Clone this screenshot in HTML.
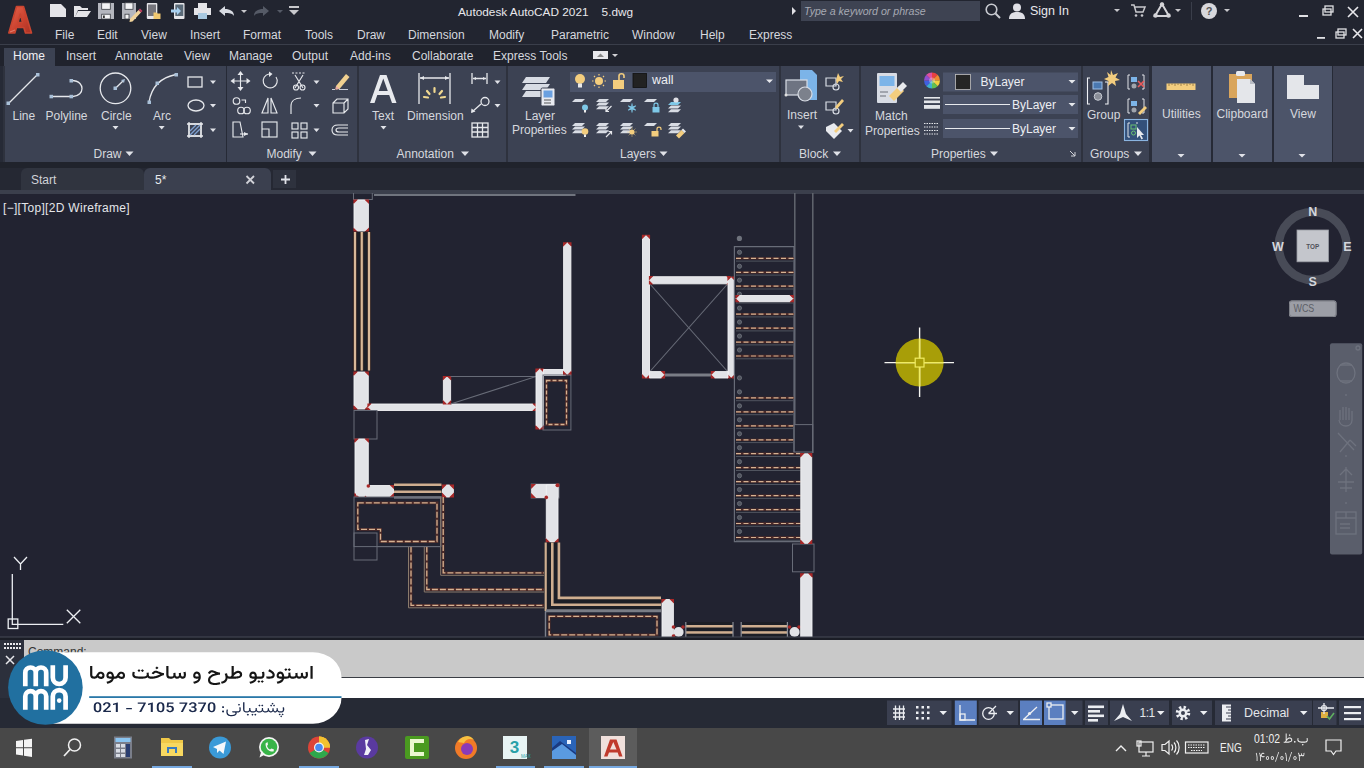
<!DOCTYPE html>
<html><head><meta charset="utf-8">
<style>
*{margin:0;padding:0;box-sizing:border-box}
html,body{width:1364px;height:768px;overflow:hidden;background:#222331;font-family:"Liberation Sans",sans-serif;font-size:12px;color:#d6d8de}
.a{position:absolute}
.t{position:absolute;white-space:nowrap;line-height:1}
svg{position:absolute;overflow:visible}
</style></head><body>

<!-- title+menu -->
<div class="a" style="left:0;top:0;width:1364px;height:44px;background:#222530"></div>
<div class="a" style="left:0;top:44px;width:1364px;height:1px;background:#3a3e4a"></div>
<!-- ribbon tab row -->
<div class="a" style="left:0;top:45px;width:1364px;height:21px;background:#20232d"></div>
<div class="a" style="left:4px;top:48px;width:51px;height:18px;background:#3c4252"></div>
<!-- ribbon panels -->
<div class="a" style="left:0;top:66px;width:1364px;height:96px;background:#262a36"></div>
<div class="a" style="left:4px;top:66px;width:222px;height:96px;background:#3c4253"></div>
<div class="a" style="left:227px;top:66px;width:130px;height:96px;background:#3c4253"></div>
<div class="a" style="left:359px;top:66px;width:147px;height:96px;background:#3c4253"></div>
<div class="a" style="left:508px;top:66px;width:271px;height:96px;background:#3c4253"></div>
<div class="a" style="left:781px;top:66px;width:78px;height:96px;background:#3c4253"></div>
<div class="a" style="left:861px;top:66px;width:220px;height:96px;background:#3c4253"></div>
<div class="a" style="left:1083px;top:66px;width:66px;height:96px;background:#3c4253"></div>
<div class="a" style="left:1152px;top:66px;width:59px;height:96px;background:#4c5469"></div>
<div class="a" style="left:1213px;top:66px;width:59px;height:96px;background:#4c5469"></div>
<div class="a" style="left:1274px;top:66px;width:58px;height:96px;background:#4c5469"></div>
<div class="a" style="left:1333px;top:66px;width:31px;height:96px;background:#3d4152"></div>
<!-- strip under ribbon -->
<div class="a" style="left:0;top:162px;width:1364px;height:5.5px;background:#20232c"></div>
<!-- file tabs -->
<div class="a" style="left:0;top:167.5px;width:1364px;height:23px;background:#252833"></div>
<div class="a" style="left:21px;top:168px;width:123px;height:22px;background:#30343f;border-radius:6px 6px 0 0"></div>
<div class="a" style="left:144px;top:168px;width:127px;height:22px;background:#3b404f;border-radius:6px 6px 0 0"></div>
<div class="a" style="left:273px;top:170px;width:23px;height:18px;background:#2e323e"></div>
<div class="a" style="left:0;top:190px;width:1364px;height:3.7px;background:#3b3f4c"></div>
<!-- command line -->
<div class="a" style="left:0;top:637px;width:1364px;height:3px;background:#1b1d26"></div>
<div class="a" style="left:0;top:640px;width:24px;height:58px;background:#2c303c"></div>
<div class="a" style="left:24px;top:640px;width:1340px;height:37px;background:#c9c9c9"></div>
<div class="a" style="left:24px;top:677px;width:1340px;height:1px;background:#3a3d44"></div>
<div class="a" style="left:24px;top:678px;width:1340px;height:20px;background:#ffffff"></div>
<!-- status bar -->
<div class="a" style="left:0;top:698px;width:1364px;height:30px;background:#262a35"></div>
<!-- taskbar -->
<div class="a" style="left:0;top:728px;width:1364px;height:40px;background:#484848"></div>


<!-- AutoCAD logo -->
<svg style="left:0;top:0" width="40" height="40" viewBox="0 0 40 40">
<defs><linearGradient id="lg" x1="0" y1="0" x2="1" y2="1"><stop offset="0" stop-color="#e8634a"/><stop offset="0.6" stop-color="#c8402e"/><stop offset="1" stop-color="#a83224"/></linearGradient></defs>
<path d="M16.5 6.5 L23.5 6.5 L31.5 33 L25.5 33 L23.8 27.5 L16.5 27.5 L14.8 33 L8.8 33 Z M18 22.5 L22.5 22.5 L20.3 14 Z" fill="url(#lg)" stroke="#c94530" stroke-width="1.6" stroke-linejoin="round" fill-rule="evenodd"/>
<path d="M10 32 L15 30" stroke="#f0a090" stroke-width="1.2" opacity="0.6"/>
</svg>
<!-- quick access -->
<svg style="left:0;top:0" width="310" height="24" viewBox="0 0 310 24">
<g fill="#e4e4e8">
<path d="M50 4 L61 4 L66 9 L66 17 L50 17 Z"/>
<path d="M74 6 L80 6 L82 8 L88 8 L88 10 L78 10 L75 17 L74 17Z M78 11 L91 11 L87 17 L75 17 Z"/>
<path d="M98 3 L114 3 L114 19 L98 19Z"/>
<path d="M122 3 L136 3 L136 19 L122 19Z"/>
</g>
<g fill="#b4b6be"><rect x="98" y="3" width="16" height="16"/><rect x="122" y="3" width="14" height="16"/></g>
<g fill="#f4f4f6" stroke="#3a3c44" stroke-width="0.8"><rect x="101.7" y="2.8" width="8.6" height="6.5"/><rect x="101.7" y="14.2" width="8.6" height="4.8"/><rect x="125" y="2.8" width="8" height="6.5"/><rect x="125" y="14.2" width="4" height="4.8"/></g>
<rect x="103" y="15.5" width="1.8" height="2.5" fill="#333"/>
<path d="M130 19 L138.5 10 L141 12.5 L132.5 21.5 L129.5 22Z" fill="#f0d29a"/><path d="M138.5 10 L140 8.5 L142.5 11 L141 12.5Z" fill="#c04060"/>
<rect x="146.8" y="3" width="10.5" height="16" rx="1" fill="#e6e6ea"/><rect x="148" y="4.5" width="8" height="11.5" fill="#75757c"/>
<path d="M153.5 12.5 L156.5 12.5 L157.5 13.5 L160.5 13.5 L160.5 19 L153.5 19Z" fill="#f0c870"/>
<rect x="174" y="3" width="10.5" height="16" rx="1" fill="#e6e6ea"/><rect x="175.3" y="4.5" width="8" height="11.5" fill="#5a6a78"/>
<path d="M171 9.5 L177 9.5 L177 7 L181 11 L177 15 L177 12.5 L171 12.5Z" fill="#a8d0f0"/>
<rect x="198" y="3" width="9" height="5" fill="#e4e4e8"/>
<rect x="194" y="8" width="17" height="7" fill="#e4e4e8"/>
<rect x="198" y="13" width="9" height="6" fill="#a8c8e0"/>
<path d="M219 11 L225 6 L225 9 C230 9 234 11 234 16 C232 13 229 13 225 13 L225 16Z" fill="#d8dbe2"/>
<path d="M241 10 L247 10 L244 13Z" fill="#c8c8cc"/>
<path d="M269 11 L263 6 L263 9 C258 9 254 11 254 16 C256 13 259 13 263 13 L263 16Z" fill="#555a66"/>
<path d="M277 10 L283 10 L280 13Z" fill="#555a66"/>
<rect x="289" y="6" width="10" height="2" fill="#c8c8cc"/>
<path d="M289 10 L299 10 L294 15Z" fill="#c8c8cc"/>
</svg>
<div class="t" style="left:458px;top:7px;font-size:11.8px;color:#e8e8ec">Autodesk AutoCAD 2021&nbsp;&nbsp;&nbsp;&nbsp;5.dwg</div>
<!-- search -->
<svg style="left:788px;top:0" width="12" height="22"><path d="M4 7 L8 11 L4 15Z" fill="#e0e0e4"/></svg>
<div class="a" style="left:801px;top:1px;width:179px;height:20px;background:#3e4352"></div>
<div class="t" style="left:804px;top:6px;font-size:10.6px;font-style:italic;color:#a6a9b2">Type a keyword or phrase</div>
<svg style="left:984px;top:2px" width="20" height="20"><circle cx="7.5" cy="7.5" r="5.3" fill="none" stroke="#c8cad0" stroke-width="1.6"/><path d="M11.5 11.5 L16 16" stroke="#c8cad0" stroke-width="2"/></svg>
<svg style="left:1008px;top:2px" width="18" height="18"><circle cx="9" cy="5.5" r="4" fill="#e0e0e6"/><path d="M1 17 C1 11 5 10 9 10 C13 10 17 11 17 17Z" fill="#e0e0e6"/></svg>
<div class="t" style="left:1030px;top:5px;font-size:12.5px;color:#e8e8ec">Sign In</div>
<svg style="left:1110px;top:0" width="120" height="22">
<path d="M4 9 L10 9 L7 12Z" fill="#c8c8cc"/>
<path d="M21 5 L24 5 L26 12 L33 12 L35 7 L25 7" fill="none" stroke="#c8c8cc" stroke-width="1.5"/><circle cx="26" cy="15.5" r="1.3" fill="#c8c8cc"/><circle cx="32" cy="15.5" r="1.3" fill="#c8c8cc"/>
<path d="M52 4 L45 16 L59 16Z" fill="none" stroke="#d4d4d8" stroke-width="2"/><circle cx="52" cy="4.5" r="2.2" fill="#d4d4d8"/><circle cx="45.5" cy="15.5" r="2.2" fill="#d4d4d8"/><circle cx="58.5" cy="15.5" r="2.2" fill="#d4d4d8"/>
<path d="M65 9 L71 9 L68 12Z" fill="#c8c8cc"/>
<rect x="81" y="2" width="1" height="18" fill="#3a3e4a"/>
<circle cx="99" cy="11" r="8" fill="#d8d8dc"/><text x="99" y="15" font-size="11" text-anchor="middle" fill="#555" font-family="Liberation Sans" font-weight="bold">?</text>
<path d="M114 9 L120 9 L117 12Z" fill="#c8c8cc"/>
</svg>
<!-- window buttons -->
<svg style="left:1290px;top:0" width="74" height="44">
<rect x="9" y="15" width="9" height="2" fill="#e0e0e4"/>
<rect x="33" y="9" width="8" height="6" fill="none" stroke="#e0e0e4" stroke-width="1.3"/><rect x="35" y="6" width="8" height="6" fill="none" stroke="#e0e0e4" stroke-width="1.3"/>
<path d="M58 7 L68 17 M68 7 L58 17" stroke="#e8e8ec" stroke-width="1.6"/>
<rect x="27" y="37" width="8" height="1.8" fill="#e0e0e4"/>
<rect x="46" y="32" width="8" height="6" fill="none" stroke="#e0e0e4" stroke-width="1.3"/><rect x="48" y="29" width="8" height="6" fill="none" stroke="#e0e0e4" stroke-width="1.3"/>
<path d="M63 29 L72 38 M72 29 L63 38" stroke="#e8e8ec" stroke-width="1.6"/>
</svg>
<!-- menu -->
<div class="t" style="left:55px;top:28.8px">File</div>
<div class="t" style="left:97px;top:28.8px">Edit</div>
<div class="t" style="left:141px;top:28.8px">View</div>
<div class="t" style="left:190px;top:28.8px">Insert</div>
<div class="t" style="left:243px;top:28.8px">Format</div>
<div class="t" style="left:305px;top:28.8px">Tools</div>
<div class="t" style="left:357px;top:28.8px">Draw</div>
<div class="t" style="left:408px;top:28.8px">Dimension</div>
<div class="t" style="left:489px;top:28.8px">Modify</div>
<div class="t" style="left:551px;top:28.8px">Parametric</div>
<div class="t" style="left:632px;top:28.8px">Window</div>
<div class="t" style="left:700px;top:28.8px">Help</div>
<div class="t" style="left:749px;top:28.8px">Express</div>
<!-- ribbon tabs -->
<div class="t" style="left:13px;top:50px;color:#f0f0f4">Home</div>
<div class="t" style="left:66px;top:50px">Insert</div>
<div class="t" style="left:115px;top:50px">Annotate</div>
<div class="t" style="left:184px;top:50px">View</div>
<div class="t" style="left:229px;top:50px">Manage</div>
<div class="t" style="left:292px;top:50px">Output</div>
<div class="t" style="left:350px;top:50px">Add-ins</div>
<div class="t" style="left:412px;top:50px">Collaborate</div>
<div class="t" style="left:493px;top:50px">Express Tools</div>
<svg style="left:590px;top:48px" width="30" height="16"><rect x="3" y="3" width="15" height="8" fill="#e8e8ec"/><path d="M7 9 L10.5 5.5 L14 9Z" fill="#888"/><path d="M22 6 L28 6 L25 9Z" fill="#d0d0d4"/></svg>

<!-- panel dividers (dark left line) -->
<div class="a" style="left:3px;top:66px;width:2px;height:96px;background:#2e323e"></div>
<!-- Draw panel -->
<svg style="left:0;top:66px" width="230" height="96" viewBox="0 66 230 96">
<g stroke="#e6e8ec" fill="none" stroke-width="1.3">
<path d="M8.5 103.5 L37.5 74.5"/>
<path d="M51.5 96.5 L71.5 96.5 M71.5 80.5 C80 80.5 82 86 82 88.5 C82 92 79 96.5 73 96.5"/>
<circle cx="115.5" cy="88.3" r="15.3"/>
<path d="M115.5 88.3 L123 81"/>
<path d="M149 102 C151 90 158 78 176 74.5"/>
</g>
<g fill="#a9c0d8">
<rect x="6.5" y="101.5" width="3.5" height="3.5"/><rect x="36" y="73" width="3.5" height="3.5"/>
<rect x="49.5" y="94.8" width="3.5" height="3.5"/><rect x="69.5" y="94.8" width="3.5" height="3.5"/><rect x="69.5" y="79" width="3.5" height="3.5"/>
<rect x="113.5" y="86.5" width="3.5" height="3.5"/>
<rect x="147.5" y="100.5" width="3.5" height="3.5"/><rect x="155.5" y="81.5" width="3.5" height="3.5"/><rect x="174.5" y="73" width="3.5" height="3.5"/>
</g>
<path d="M121 80 L125 79 L124 83Z" fill="#a9c0d8"/>
<g stroke="#e6e8ec" fill="none" stroke-width="1.3">
<rect x="188" y="77" width="14" height="10"/>
<ellipse cx="196" cy="105.5" rx="8" ry="5.5"/>
<rect x="189" y="124" width="12" height="12"/>
<path d="M187 124 L203 124 M187 136 L203 136 M189 122 L189 138 M201 122 L201 138"/>
</g>
<path d="M190 135 L200 125 M190 131 L196 125 M194 135 L200 129" stroke="#7fa0d0" stroke-width="1.4"/>
<g fill="#e0e2e8">
<path d="M210 80.5 L216 80.5 L213 84Z"/><path d="M210 104 L216 104 L213 107.5Z"/><path d="M210 128.5 L216 128.5 L213 132Z"/>
<path d="M112.5 126 L118.5 126 L115.5 129.5Z"/><path d="M158.7 126 L164.7 126 L161.7 129.5Z"/>
<path d="M125.5 151.5 L133.5 151.5 L129.5 156Z"/>
</g>
</svg>
<div class="t" style="left:12.5px;top:110px">Line</div>
<div class="t" style="left:45.5px;top:110px">Polyline</div>
<div class="t" style="left:101px;top:110px">Circle</div>
<div class="t" style="left:153px;top:110px">Arc</div>
<div class="t" style="left:93.5px;top:147.5px">Draw</div>

<!-- Modify panel -->
<div class="a" style="left:357px;top:66px;width:2px;height:96px;background:#2e323e"></div>
<svg style="left:226px;top:66px" width="134" height="96" viewBox="226 66 134 96">
<g stroke="#e6e8ec" fill="none" stroke-width="1.15">
<path d="M240.5 73 L240.5 89 M232.5 81 L248.5 81"/>
<path d="M276 77 A7 7 0 1 1 269 74"/>
<path d="M292 73 L306 73" stroke-dasharray="2 1.5"/>
<path d="M295 75 L303 88 M303 75 L295 88"/>
<circle cx="296" cy="87.5" r="2.5"/><circle cx="302.5" cy="87.5" r="2.5"/>
<circle cx="236.5" cy="101" r="3.3"/>
<path d="M241.5 100 L245.5 100 L245.5 103"/>
<circle cx="241" cy="110.5" r="3.3"/><circle cx="247" cy="110.5" r="3.3"/>
<path d="M268 98 L262 113 L268 113 Z M271 98 L277 113 L271 113 Z"/>
<path d="M291 114 L291 106 C291 101 295 98 301 98"/>
<path d="M333 103 L337 99 L348 99 L348 109 L344 113 L333 113 Z M333 103 L344 103 L344 113 M344 103 L348 99"/>
<path d="M233 122 L240 122 L243 137 L233 137 Z"/>
<path d="M240 134 L248 134"/>
<rect x="262" y="122" width="15" height="15"/><path d="M262 129 L269 129 L269 137"/>
<rect x="292" y="123" width="6" height="6"/><rect x="301" y="123" width="6" height="6"/><rect x="292" y="132" width="6" height="6"/><rect x="301" y="132" width="6" height="6"/>
<path d="M348 125 L338 125 C334 125 332 127 332 130 C332 133 334 135 338 135 L348 135 M348 128 L339 128 C337 128 336 129 336 130 C336 131 337 132 339 132 L348 132"/>
</g>
<path d="M240.5 71 L237.5 75 L243.5 75Z M240.5 91 L237.5 87 L243.5 87Z M230.5 81 L234.5 78 L234.5 84Z M250.5 81 L246.5 78 L246.5 84Z" fill="#e6e8ec"/>
<path d="M269 71.5 L272.5 74 L269 77Z" fill="#e6e8ec"/>
<path d="M336 86 L346 74 L349.5 77 L339.5 89 L335.5 89.5Z" fill="#f0d090"/>
<path d="M335.5 89.5 L339.5 89 L336 86Z" fill="#e8a8a8"/>
<path d="M332 89.5 L335 89.5 M339 89.5 L348 89.5" stroke="#c8ccd8" stroke-width="1"/>
<path d="M244 132 L248 134 L244 136Z" fill="#e6e8ec"/>
<g fill="#e0e2e8"><path d="M313.5 80.5 L319.5 80.5 L316.5 84Z"/><path d="M313.5 104 L319.5 104 L316.5 107.5Z"/><path d="M313.5 128.5 L319.5 128.5 L316.5 132Z"/>
<path d="M308.5 151.5 L316.5 151.5 L312.5 156Z"/></g>
</svg>
<div class="t" style="left:266.5px;top:147.5px">Modify</div>

<!-- Annotation panel -->
<div class="a" style="left:506px;top:66px;width:2px;height:96px;background:#2e323e"></div>
<svg style="left:359px;top:66px" width="150" height="96" viewBox="359 66 150 96">
<path d="M380 75 L386.5 75 L396.5 103 L392 103 L389.2 95 L377.3 95 L374.5 103 L370 103 Z M378.7 91 L387.8 91 L383.3 78.5 Z" fill="#e8eaee" fill-rule="evenodd"/>
<g stroke="#e6e8ec" fill="none" stroke-width="1.3">
<path d="M419 73 L419 104 M450 73 L450 104 M420 78 L449 78"/>
<path d="M472 98 L472 109 M487 98 L487 109 M473 103.5 L486 103.5" transform="translate(0,-25)"/>
<path d="M472 112 L481 104"/><circle cx="485" cy="101.5" r="4"/>
<rect x="472" y="123" width="16" height="14"/><path d="M472 127.5 L488 127.5 M472 132 L488 132 M477.5 123 L477.5 137 M482.5 123 L482.5 137"/>
</g>
<path d="M420 78 L424 76 L424 80Z M449 78 L445 76 L445 80Z" fill="#e6e8ec"/>
<path d="M473 78.5 L476 77 L476 80Z M486 78.5 L483 77 L483 80Z" fill="#e6e8ec"/>
<path d="M471 113 L471.5 108.5 L475.5 111.5Z" fill="#e6e8ec"/>
<g stroke="#f0d890" stroke-width="2.2" stroke-linecap="round">
<path d="M434.5 88 L434.5 92"/><path d="M427 91 L429.5 94"/><path d="M442 91 L439.5 94"/><path d="M424 97 L428 97.5"/><path d="M445 97 L441 97.5"/>
</g>
<g fill="#e0e2e8"><path d="M380.5 126 L386.5 126 L383.5 129.5Z"/><path d="M494.5 80.5 L500.5 80.5 L497.5 84Z"/><path d="M494.5 104 L500.5 104 L497.5 107.5Z"/>
<path d="M461 151.5 L469 151.5 L465 156Z"/></g>
</svg>
<div class="t" style="left:372px;top:110px">Text</div>
<div class="t" style="left:407px;top:110px">Dimension</div>
<div class="t" style="left:396.5px;top:147.5px">Annotation</div>

<!-- Layers panel -->
<div class="a" style="left:779px;top:66px;width:2px;height:96px;background:#2e323e"></div>
<svg style="left:508px;top:66px" width="272" height="96" viewBox="508 66 272 96">
<g fill="#d8dce4">
<path d="M526 77 L550 77 L546 83 L522 83Z"/><path d="M526 84 L550 84 L546 90 L522 90Z"/><path d="M526 91 L550 91 L546 97 L522 97Z"/>
</g>
<rect x="541" y="88" width="14" height="18" rx="1.5" fill="#e8eaf0" stroke="#3c4253" stroke-width="1"/>
<rect x="543.5" y="90.5" width="9" height="7" fill="#6aa0e0"/>
<path d="M544 100 L551 100 M544 103 L551 103" stroke="#555" stroke-width="1"/>
<rect x="570" y="72" width="206" height="20" fill="#4c546a"/>
<circle cx="580" cy="79" r="5" fill="#f3cd7e"/><rect x="578" y="83.5" width="4" height="4" fill="#eaeaea"/>
<circle cx="599" cy="81" r="4" fill="#f3cd7e"/>
<g stroke="#f3cd7e" stroke-width="1.2"><path d="M599 74 L599 75.5 M599 86.5 L599 88 M592 81 L593.5 81 M604.5 81 L606 81 M594 76 L595 77 M603 85 L604 86 M604 76 L603 77 M594 86 L595 85"/></g>
<rect x="613" y="80" width="11" height="9" fill="#f3cd7e"/><path d="M619 80 L619 76 C619 73 624 73 624 76 L624 78" stroke="#f3cd7e" stroke-width="1.6" fill="none"/>
<rect x="633" y="73.5" width="13.5" height="14" fill="#222222" stroke="#111" stroke-width="0.8"/>
<path d="M766 79.5 L773 79.5 L769.5 83Z" fill="#e6e8ec"/>
<path d="M575.0 99.0 L585.0 99.0 L582.0 102.0 L572.0 102.0Z" fill="#d8dce4"/><circle cx="585" cy="107.5" r="3" fill="#7ec8e8"/><rect x="584" y="110" width="2" height="2.5" fill="#eee"/><path d="M599.0 99.0 L609.0 99.0 L606.0 102.0 L596.0 102.0Z" fill="#d8dce4"/><path d="M599.0 102.6 L609.0 102.6 L606.0 105.6 L596.0 105.6Z" fill="#d8dce4"/><path d="M599.0 106.2 L609.0 106.2 L606.0 109.2 L596.0 109.2Z" fill="#d8dce4"/><path d="M611.5 106 L606 111.5 M606 108.5 L606 111.5 L609 111.5" stroke="#e6e8ec" stroke-width="1.2" fill="none"/><path d="M623.0 99.0 L633.0 99.0 L630.0 102.0 L620.0 102.0Z" fill="#d8dce4"/><g stroke="#7ec8e8" stroke-width="1.1"><path d="M632 103.5 L632 112.5 M628.2 105.7 L635.8 110.3 M635.8 105.7 L628.2 110.3"/></g><circle cx="632" cy="108" r="2" fill="none" stroke="#7ec8e8" stroke-width="0.9"/><path d="M647.0 99.0 L657.0 99.0 L654.0 102.0 L644.0 102.0Z" fill="#d8dce4"/><rect x="652.5" y="107" width="7" height="5.5" fill="#7ec8e8"/><path d="M654 107 L654 105 C654 102.5 658 102.5 658 105 L658 107" stroke="#7ec8e8" stroke-width="1.2" fill="none"/><path d="M671.0 102.0 L681.0 102.0 L678.0 105.0 L668.0 105.0Z" fill="#7ec8e8"/><path d="M671.0 105.6 L681.0 105.6 L678.0 108.6 L668.0 108.6Z" fill="#d8dce4"/><path d="M671.0 109.2 L681.0 109.2 L678.0 112.2 L668.0 112.2Z" fill="#d8dce4"/><circle cx="676" cy="100" r="2.6" fill="#e0e0e6"/><path d="M575.0 123.0 L585.0 123.0 L582.0 126.0 L572.0 126.0Z" fill="#d8dce4"/><path d="M575.0 126.6 L585.0 126.6 L582.0 129.6 L572.0 129.6Z" fill="#d8dce4"/><path d="M575.0 130.2 L585.0 130.2 L582.0 133.2 L572.0 133.2Z" fill="#d8dce4"/><circle cx="585" cy="131.5" r="3.3" fill="#f3cd7e"/><rect x="584" y="134.5" width="2" height="2.5" fill="#eee"/><path d="M599.0 123.0 L609.0 123.0 L606.0 126.0 L596.0 126.0Z" fill="#d8dce4"/><path d="M599.0 126.6 L609.0 126.6 L606.0 129.6 L596.0 129.6Z" fill="#d8dce4"/><path d="M599.0 130.2 L609.0 130.2 L606.0 133.2 L596.0 133.2Z" fill="#d8dce4"/><path d="M606 137 L611.5 131.5 M608.5 131.5 L611.5 131.5 L611.5 134.5" stroke="#e6e8ec" stroke-width="1.2" fill="none"/><path d="M623.0 123.0 L633.0 123.0 L630.0 126.0 L620.0 126.0Z" fill="#d8dce4"/><path d="M623.0 126.6 L633.0 126.6 L630.0 129.6 L620.0 129.6Z" fill="#d8dce4"/><path d="M623.0 130.2 L633.0 130.2 L630.0 133.2 L620.0 133.2Z" fill="#d8dce4"/><circle cx="632" cy="132" r="2.6" fill="#f3cd7e"/><g stroke="#f3cd7e" stroke-width="0.9"><path d="M632 127.5 L632 128.5 M632 135.5 L632 136.5 M627.5 132 L628.5 132 M635.5 132 L636.5 132 M628.8 128.8 L629.5 129.5 M634.5 134.5 L635.2 135.2 M635.2 128.8 L634.5 129.5 M629.5 134.5 L628.8 135.2"/></g><path d="M647.0 123.0 L657.0 123.0 L654.0 126.0 L644.0 126.0Z" fill="#d8dce4"/><rect x="651.5" y="131" width="7" height="5.5" fill="#f3cd7e"/><path d="M657 131 L657 129 C657 126.5 661 126.5 661 129 L661 130" stroke="#f3cd7e" stroke-width="1.2" fill="none"/><path d="M671.0 123.0 L681.0 123.0 L678.0 126.0 L668.0 126.0Z" fill="#d8dce4"/><path d="M671.0 126.6 L681.0 126.6 L678.0 129.6 L668.0 129.6Z" fill="#d8dce4"/><path d="M671.0 130.2 L681.0 130.2 L678.0 133.2 L668.0 133.2Z" fill="#d8dce4"/><path d="M676 135.5 L681.5 130 L684.5 133 L679 138.5Z" fill="#f3cd7e"/><path d="M681.5 130 L683 128.5 L686 131.5 L684.5 133Z" fill="#e8eaee"/>
<path d="M659.5 151.5 L667.5 151.5 L663.5 156Z" fill="#e0e2e8"/>
</svg>
<div class="t" style="left:652px;top:74px;font-size:12.5px;color:#eceef2">wall</div>
<div class="t" style="left:525px;top:109.5px">Layer</div>
<div class="t" style="left:512px;top:124px">Properties</div>
<div class="t" style="left:620px;top:147.5px">Layers</div>

<!-- Block panel -->
<div class="a" style="left:859px;top:66px;width:2px;height:96px;background:#2e323e"></div>
<svg style="left:780px;top:66px" width="82" height="96" viewBox="780 66 82 96">
<path d="M800 70 L812 70 L817 75 L817 100 L800 100Z" fill="#7cb4e8"/>
<rect x="786" y="80" width="21" height="15" fill="#6e7482" stroke="#d8dce4" stroke-width="1.2"/>
<circle cx="805" cy="94" r="7" fill="#7c818c" stroke="#d8dce4" stroke-width="1.2"/>
<circle cx="786" cy="95" r="1.5" fill="#e0e0e0"/>
<g stroke="#d8dce4" fill="none" stroke-width="1.2">
<path d="M826 78 L836 78 L836 86 L826 86Z"/><circle cx="836" cy="87" r="3"/>
<path d="M826 102 L836 102 L836 110 L826 110Z"/><circle cx="836" cy="111" r="3"/>
</g>
<path d="M838 73 L840 77 L844 76 L841 79 L843 82 L839 81 L837 84 L836 80Z" fill="#f3cd7e"/>
<path d="M835 107 L842 99 L844 101 L837 109Z" fill="#f3cd7e"/>
<path d="M826 127 L834 123 L842 131 L834 139 L826 131Z" fill="#e8eaee"/>
<path d="M834 131 L842 123 L844 125 L836 133Z" fill="#f3cd7e"/>
<g fill="#e0e2e8"><path d="M798 125.5 L804 125.5 L801 129Z"/><path d="M847.5 129 L853.5 129 L850.5 132.5Z"/><path d="M833 151.5 L841 151.5 L837 156Z"/></g>
</svg>
<div class="t" style="left:787px;top:108.5px">Insert</div>
<div class="t" style="left:799px;top:147.5px">Block</div>

<!-- Properties panel -->
<div class="a" style="left:1081px;top:66px;width:2px;height:96px;background:#2e323e"></div>
<svg style="left:861px;top:66px" width="222" height="96" viewBox="861 66 222 96">
<rect x="877" y="73" width="20" height="30" rx="1" fill="#d8dce4"/>
<rect x="879.5" y="76" width="15" height="10" fill="#7cb4e8"/>
<path d="M880 92 L888 92 M880 96 L886 96" stroke="#6a6e78" stroke-width="1.2"/>
<path d="M889 96 L899 86 L904 91 L894 101Z" fill="#f3cd7e"/>
<path d="M897 88 L903 82 L907 86 L901 92Z" fill="#e8eaee"/>
<defs><linearGradient id="cw" x1="0" y1="0" x2="1" y2="1"><stop offset="0" stop-color="#e85a5a"/><stop offset="0.35" stop-color="#f0c040"/><stop offset="0.6" stop-color="#5ac860"/><stop offset="1" stop-color="#5a78e8"/></linearGradient></defs>
<path d="M932 80.5 L932.00 72.50 A8 8 0 0 1 937.66 74.84Z" fill="#e84040"/><path d="M932 80.5 L937.66 74.84 A8 8 0 0 1 940.00 80.50Z" fill="#f08830"/><path d="M932 80.5 L940.00 80.50 A8 8 0 0 1 937.66 86.16Z" fill="#f0d040"/><path d="M932 80.5 L937.66 86.16 A8 8 0 0 1 932.00 88.50Z" fill="#60c050"/><path d="M932 80.5 L932.00 88.50 A8 8 0 0 1 926.34 86.16Z" fill="#40b0d0"/><path d="M932 80.5 L926.34 86.16 A8 8 0 0 1 924.00 80.50Z" fill="#4060e0"/><path d="M932 80.5 L924.00 80.50 A8 8 0 0 1 926.34 74.84Z" fill="#9050d0"/><path d="M932 80.5 L926.34 74.84 A8 8 0 0 1 932.00 72.50Z" fill="#e050a0"/><circle cx="932" cy="80.5" r="3" fill="#f0f0f0" opacity="0.35"/>
<g fill="#e4e6ea"><rect x="924" y="97" width="16" height="1.6"/><rect x="924" y="100.5" width="16" height="2.6"/><rect x="924" y="105" width="16" height="3.8"/></g>
<g stroke="#e4e6ea" stroke-width="1" stroke-dasharray="1.5 1"><path d="M924 123.5 L939 123.5 M924 127 L939 127 M924 130.5 L939 130.5 M924 134 L939 134"/></g>
<rect x="943" y="72.5" width="135" height="19" fill="#4c546a"/>
<rect x="943" y="95" width="135" height="19" fill="#4c546a"/>
<rect x="943" y="119" width="135" height="19" fill="#4c546a"/>
<rect x="955.5" y="74.5" width="15" height="15" fill="#252525" stroke="#c0c0c0" stroke-width="0.8"/>
<path d="M945 104.5 L1010 104.5 M945 128.5 L1010 128.5" stroke="#e8eaee" stroke-width="1.2"/>
<g fill="#e6e8ec"><path d="M1068.5 80 L1075.5 80 L1072 83.5Z"/><path d="M1068.5 103 L1075.5 103 L1072 106.5Z"/><path d="M1068.5 127 L1075.5 127 L1072 130.5Z"/></g>
<path d="M990 151.5 L998 151.5 L994 156Z" fill="#e0e2e8"/>
<path d="M1070 151 L1075 156 M1075 152 L1075 156 L1071 156" stroke="#d0d2d8" stroke-width="1" fill="none"/>
</svg>
<div class="t" style="left:980.5px;top:75.5px;color:#eceef2">ByLayer</div>
<div class="t" style="left:1012px;top:98.5px;color:#eceef2">ByLayer</div>
<div class="t" style="left:1012px;top:122.5px;color:#eceef2">ByLayer</div>
<div class="t" style="left:875px;top:109.5px">Match</div>
<div class="t" style="left:865px;top:124.5px">Properties</div>
<div class="t" style="left:931px;top:147.5px">Properties</div>

<!-- Groups panel -->
<div class="a" style="left:1149px;top:66px;width:3px;height:96px;background:#2a2e3a"></div>
<svg style="left:1083px;top:66px" width="70" height="96" viewBox="1083 66 70 96">
<path d="M1090 78 L1087.5 78 L1087.5 104 L1090 104 M1105 82 L1108 82 L1108 104 L1105 104" stroke="#f0f2f6" stroke-width="1.1" fill="none"/>
<rect x="1093" y="82" width="9" height="7" fill="#4a78b0" stroke="#9ec0e8" stroke-width="1"/>
<circle cx="1098" cy="96.5" r="3.8" fill="#8a8e98" stroke="#c8ccd4" stroke-width="1"/>
<path d="M1111 70 L1113 75 L1118 73 L1115.5 77.5 L1120 80 L1115 81 L1116 86 L1112 83 L1108 86 L1108.5 81 L1104 79 L1108.5 77 L1107 72 L1110.5 75Z" fill="#f3cd7e"/>
<g stroke="#e0e2e8" stroke-width="1" fill="none">
<path d="M1130 75 L1128 75 L1128 89 L1130 89 M1142 75 L1144 75 L1144 89 L1142 89"/>
<path d="M1130 99 L1128 99 L1128 113 L1130 113 M1142 99 L1144 99 L1144 113 L1142 113"/>
<path d="M1130 123 L1128 123 L1128 137 L1130 137"/>
</g>
<rect x="1131" y="77" width="6" height="5" fill="#7cb4e8"/><circle cx="1134" cy="86" r="2.5" fill="#a0a4ac"/>
<path d="M1138 81 L1144 87 M1144 81 L1138 87" stroke="#e85a5a" stroke-width="1.6"/>
<rect x="1131" y="101" width="6" height="5" fill="#7cb4e8"/><circle cx="1134" cy="110" r="2.5" fill="#a0a4ac"/>
<path d="M1138 113 L1145 106 L1147 108 L1140 115Z" fill="#f3cd7e"/>
<rect x="1124.5" y="119.5" width="23" height="21" fill="#33507a" stroke="#8ab4e0" stroke-width="1.1"/><path d="M1130 123 L1128 123 L1128 137 L1130 137 M1136 123 L1138 123" stroke="#e0e2e8" stroke-width="1" fill="none"/>
<rect x="1131" y="125" width="5" height="4" fill="none" stroke="#6ac070" stroke-width="1"/><circle cx="1133.5" cy="133" r="2" fill="none" stroke="#6ac070" stroke-width="1"/>
<path d="M1137 127 L1137 138 L1139.5 135.5 L1141.5 139.5 L1143 138.5 L1141 135 L1144 135Z" fill="#e8eaee"/>
<path d="M1134 151.5 L1142 151.5 L1138 156Z" fill="#e0e2e8"/>
</svg>
<div class="t" style="left:1087px;top:109px">Group</div>
<div class="t" style="left:1090px;top:147.5px">Groups</div>

<!-- Utilities / Clipboard / View -->
<svg style="left:1152px;top:66px" width="212" height="96" viewBox="1152 66 212 96">
<rect x="1166.5" y="83.5" width="29" height="6.5" fill="#f3cd7e"/>
<path d="M1169 83.5 L1169 86 M1172 83.5 L1172 85 M1175 83.5 L1175 86 M1178 83.5 L1178 85 M1181 83.5 L1181 86 M1184 83.5 L1184 85 M1187 83.5 L1187 86 M1190 83.5 L1190 85 M1193 83.5 L1193 86" stroke="#8a7040" stroke-width="0.8"/>
<rect x="1229" y="74" width="23" height="24" fill="#d9a55c"/>
<rect x="1236" y="71" width="9" height="5" rx="1.5" fill="#e8eaee"/>
<path d="M1237 79 L1250 79 L1255 84 L1255 103 L1237 103Z" fill="#e4e6ea"/>
<path d="M1250 79 L1250 84 L1255 84Z" fill="#b8bcc4"/>
<path d="M1287 75 L1304 75 L1304 85 L1319 85 L1319 99 L1287 99Z" fill="#e4e6ea"/>
<g fill="#e0e2e8"><path d="M1177.5 154 L1184.5 154 L1181 157.5Z"/><path d="M1238.5 154 L1245.5 154 L1242 157.5Z"/><path d="M1298.5 154 L1305.5 154 L1302 157.5Z"/></g>
</svg>
<div class="t" style="left:1162px;top:107.5px">Utilities</div>
<div class="t" style="left:1216.5px;top:107.5px">Clipboard</div>
<div class="t" style="left:1290px;top:107.5px">View</div>

<!-- file tabs -->
<div class="t" style="left:31px;top:173.5px;color:#d0d2d8">Start</div>
<div class="t" style="left:155px;top:173.5px;color:#e8eaee">5*</div>
<svg style="left:240px;top:168px" width="60" height="24">
<path d="M6.5 8 L14 15.5 M14 8 L6.5 15.5" stroke="#d0d2d8" stroke-width="1.8"/>
<path d="M45.5 7 L45.5 16 M41 11.5 L50 11.5" stroke="#e0e2e8" stroke-width="1.8"/>
</svg>
<!-- viewport label -->
<div class="t" style="left:3px;top:202px;font-size:12px;letter-spacing:0.3px;color:#e4e6ea">[&#8722;][Top][2D Wireframe]</div>
<!-- ViewCube -->
<svg style="left:1260px;top:195px" width="104" height="130" viewBox="1260 195 104 130">
<circle cx="1312.7" cy="246" r="34" fill="none" stroke="#484b57" stroke-width="8.5"/>
<rect x="1297" y="230" width="31.5" height="31.8" fill="#c4c6cc"/>
<rect x="1297" y="230" width="31.5" height="31.8" fill="none" stroke="#9a9ca4" stroke-width="0.8"/>
<text x="1312.7" y="249.3" font-family="Liberation Sans" font-size="7.5" font-weight="bold" text-anchor="middle" fill="#50525a" transform="translate(1312.7 0) scale(0.85 1) translate(-1312.7 0)">TOP</text>
<g font-family="Liberation Sans" font-weight="bold" font-size="12.5" fill="#d4d6dc" text-anchor="middle">
<text x="1312.7" y="216.3">N</text><text x="1312.7" y="286">S</text><text x="1278" y="250.8">W</text><text x="1347.5" y="250.8">E</text>
</g>
<rect x="1289" y="300.5" width="47.5" height="16.5" rx="2.5" fill="#9c9ea6"/>
<rect x="1289.5" y="301" width="46.5" height="15.5" rx="2.5" fill="none" stroke="#7c7e86" stroke-width="1"/>
<text x="1293.5" y="312.5" font-family="Liberation Sans" font-size="10.5" fill="#5c5e66" transform="translate(1293.5 0) scale(0.85 1) translate(-1293.5 0)">WCS</text>
</svg>
<!-- nav bar -->
<svg style="left:1328px;top:342px" width="36" height="214" viewBox="1328 342 36 214">
<rect x="1330" y="343.2" width="32.2" height="211.2" rx="2" fill="#5a5e6b"/>
<g stroke="#6e727e" stroke-width="1.3" fill="none">
<circle cx="1358" cy="348" r="2"/>
<ellipse cx="1346" cy="373" rx="9" ry="10"/><path d="M1340 365 L1352 365 M1340 381 L1352 381"/>
<path d="M1346 394 L1346 396 M1346 455 L1346 457 M1346 502 L1346 504"/>
<path d="M1340 420 L1340 410 M1343 420 L1343 407 M1346 420 L1346 407 M1349 420 L1349 408 M1352 420 L1352 411 M1339 420 C1340 428 1352 428 1352 420"/>
<path d="M1338 433 L1354 450 M1340 452 L1350 440 M1350 440 L1356 446"/>
<path d="M1346 467 L1346 492 M1340 475 L1346 469 L1352 475 M1338 482 L1354 482 M1340 488 L1352 488"/>
<rect x="1336" y="512" width="20" height="22"/><path d="M1336 518 L1356 518 M1346 512 L1346 518 M1340 524 L1350 524 M1340 528 L1350 528"/>
</g>
</svg>
<!-- cursor -->
<svg style="left:880px;top:322px" width="80" height="80" viewBox="880 322 80 80">
<circle cx="919.6" cy="362.6" r="24" fill="#a89e08"/>
<path d="M919.6 327.5 L919.6 397 M884.5 362.6 L954 362.6" stroke="#f4f4f0" stroke-width="1.4"/>
<path d="M919.6 338.6 L919.6 386.6 M895.6 362.6 L943.6 362.6" stroke="#f0ec60" stroke-width="1.4"/>
<rect x="915.2" y="358.2" width="8.8" height="8.8" fill="#a89e08" stroke="#f0ec60" stroke-width="1.2"/>
</svg>
<!-- UCS icon -->
<svg style="left:0;top:550px" width="90" height="90" viewBox="0 550 90 90">
<g stroke="#eceef2" stroke-width="1.3" fill="none">
<path d="M12.3 574 L12.3 624.4 L63.3 624.4"/>
<rect x="8.2" y="619" width="9.6" height="9.5"/>
<path d="M14 557 L20.5 564 L27 557 M20.5 564 L20.5 570"/>
<path d="M66.8 609.8 L80.3 623.2 M80.3 609.8 L66.8 623.2"/>
</g>
</svg>

<!-- command line left strip -->
<svg style="left:0;top:640px" width="24" height="58">
<g fill="#e8e8ec"><rect x="4" y="3" width="2" height="2"/><rect x="7" y="3" width="2" height="2"/><rect x="10" y="3" width="2" height="2"/><rect x="13" y="3" width="2" height="2"/><rect x="16" y="3" width="2" height="2"/><rect x="19" y="3" width="2" height="2"/>
<rect x="4" y="7" width="2" height="2"/><rect x="7" y="7" width="2" height="2"/><rect x="10" y="7" width="2" height="2"/><rect x="13" y="7" width="2" height="2"/><rect x="16" y="7" width="2" height="2"/><rect x="19" y="7" width="2" height="2"/></g>
<path d="M6 16 L14 24 M14 16 L6 24" stroke="#e8e8ec" stroke-width="1.5"/>
</svg>
<div class="t" style="left:28px;top:646px;color:#333">Command:</div>
<!-- status bar buttons -->
<svg style="left:880px;top:698px" width="484" height="30" viewBox="880 698 484 30">
<g fill="#3a3f50">
<rect x="887" y="700.5" width="64.5" height="24.5"/>
<rect x="978.6" y="700.5" width="39.5" height="24.5"/>
<rect x="1066" y="700.5" width="16.5" height="24.5"/>
<rect x="1085" y="700.5" width="23" height="24.5"/>
<rect x="1110" y="700.5" width="59" height="24.5"/>
<rect x="1172" y="700.5" width="40" height="24.5"/>
<rect x="1215" y="700.5" width="97" height="24.5"/>
<rect x="1313" y="700.5" width="23.5" height="24.5"/>
<rect x="1339" y="700.5" width="25" height="24.5"/>
</g>
<g fill="#5b7fc0"><rect x="954.8" y="700.5" width="22" height="24.5"/><rect x="1020" y="700.5" width="22" height="24.5"/><rect x="1044" y="700.5" width="21.7" height="24.5"/></g>
<g stroke="#eceef2" stroke-width="1.3" fill="none">
<path d="M893 709 L905 709 M893 713 L905 713 M893 717 L905 717 M895.5 705.5 L895.5 720 M899.5 705.5 L899.5 720 M903.5 705.5 L903.5 720"/>
<path d="M960 705 L960 720 L975 720"/><rect x="960" y="714" width="5" height="6"/>
<circle cx="988.5" cy="713.5" r="5.8"/><path d="M988.5 713.5 L996 706 M988.5 713.5 L997 713.5"/>
<path d="M1023 719.5 L1040 719.5 M1023.5 719.5 L1037 707"/>
<rect x="1049" y="705" width="14" height="14"/><rect x="1047" y="703" width="4" height="4" fill="#5b7fc0"/>
</g>
<g fill="#eceef2">
<rect x="916" y="706" width="2.5" height="2.5"/><rect x="921.5" y="706" width="2.5" height="2.5"/><rect x="927" y="706" width="2.5" height="2.5"/>
<rect x="916" y="711.5" width="2.5" height="2.5"/><rect x="921.5" y="711.5" width="2.5" height="2.5"/><rect x="927" y="711.5" width="2.5" height="2.5"/>
<rect x="916" y="717" width="2.5" height="2.5"/><rect x="921.5" y="717" width="2.5" height="2.5"/><rect x="927" y="717" width="2.5" height="2.5"/>
<circle cx="1029.5" cy="713.5" r="1.6"/>
<path d="M939.5 711 L947 711 L943.2 715Z"/><path d="M1006.5 711 L1014 711 L1010.2 715Z"/><path d="M1071 711 L1078.5 711 L1074.7 715Z"/>
<rect x="1088" y="705.5" width="16" height="2.6"/><rect x="1088" y="710" width="12" height="2.6"/><rect x="1088" y="714.5" width="16" height="2.6"/><rect x="1088" y="719" width="10" height="2.6"/>
<path d="M1123 704 L1126 714 L1132 721 L1123 717 L1114 721 L1120 714Z"/>
<path d="M1157 711 L1164.5 711 L1160.7 715Z"/><path d="M1200 711 L1207.5 711 L1203.7 715Z"/><path d="M1300 711 L1307.5 711 L1303.7 715Z"/>
<rect x="1222" y="704.5" width="9" height="17"/>
<rect x="1344" y="706" width="17" height="2.2"/><rect x="1344" y="712" width="17" height="2.2"/><rect x="1344" y="718" width="17" height="2.2"/>
</g>
<circle cx="1183" cy="713" r="5.5" fill="none" stroke="#eceef2" stroke-width="3.5" stroke-dasharray="2.2 2.1"/>
<circle cx="1183" cy="713" r="4.5" fill="#eceef2"/><circle cx="1183" cy="713" r="2" fill="#3a3f50"/>
<g stroke="#3a3f50" stroke-width="1"><path d="M1226 707 L1231 707 M1228 710 L1231 710 M1226 713 L1231 713 M1228 716 L1231 716 M1226 719 L1231 719"/></g>
<rect x="1321" y="712" width="7" height="6" fill="#e0b040"/>
<path d="M1324 703 L1324 714 M1318 708 L1334 708" stroke="#e8eaee" stroke-width="1.3"/><circle cx="1324" cy="708" r="2.5" fill="none" stroke="#e8eaee" stroke-width="1.2"/>
<path d="M1327 716 L1329.5 719 L1334 713" stroke="#60b060" stroke-width="1.6" fill="none"/>
</svg>
<div class="t" style="left:1139.5px;top:707px;color:#e4e6ea;letter-spacing:-0.5px">1:1</div>
<div class="t" style="left:1244px;top:706.5px;color:#e4e6ea;font-size:12.5px">Decimal</div>
<!-- taskbar -->
<div class="a" style="left:589px;top:728px;width:48px;height:40px;background:#5c5c5c"></div>
<div class="a" style="left:152px;top:765.5px;width:40px;height:2.5px;background:#76a8e0"></div>
<div class="a" style="left:299px;top:765.5px;width:40px;height:2.5px;background:#76a8e0"></div>
<div class="a" style="left:496px;top:765.5px;width:38.5px;height:2.5px;background:#76a8e0"></div>
<div class="a" style="left:544px;top:765.5px;width:40px;height:2.5px;background:#76a8e0"></div>
<div class="a" style="left:589px;top:765.5px;width:48px;height:2.5px;background:#76a8e0"></div>
<svg style="left:0;top:728px" width="1364" height="40" viewBox="0 728 1364 40">
<g fill="#f4f4f4"><path d="M16 741 L23 740 L23 747.3 L16 747.3Z"/><path d="M24 739.8 L32 738.7 L32 747.3 L24 747.3Z"/><path d="M16 748.3 L23 748.3 L23 755.5 L16 754.6Z"/><path d="M24 748.3 L32 748.3 L32 757 L24 755.8Z"/></g>
<circle cx="74.5" cy="745" r="6" fill="none" stroke="#f0f0f0" stroke-width="1.5"/><path d="M70 749.5 L64 756" stroke="#f0f0f0" stroke-width="1.7"/>
<rect x="114" y="736.5" width="18" height="22" fill="#7a7e8a"/><rect x="115.5" y="738" width="15" height="4" fill="#8ac4f0"/>
<g fill="#d8dce4"><rect x="116" y="744" width="4" height="3.5"/><rect x="121" y="744" width="4" height="3.5"/><rect x="116" y="749" width="4" height="3.5"/><rect x="121" y="749" width="4" height="3.5"/><rect x="116" y="754" width="4" height="3"/><rect x="121" y="754" width="4" height="3"/></g>
<rect x="126" y="744" width="4" height="13" fill="#2a3e70"/>
<path d="M161 738 L169 738 L171 740 L183 740 L183 756 L161 756Z" fill="#f0c848"/><path d="M161 743 L183 743 L183 756 L161 756Z" fill="#f8d860"/>
<rect x="167" y="747" width="10" height="6" fill="#3a7ac0"/><rect x="169" y="749" width="6" height="7" fill="#f8d860"/>
<circle cx="220" cy="747.5" r="11" fill="#3a9ad8"/><path d="M213 747 L226 741.5 L223.5 754 L219.5 750.5 L217 753 L217 749Z" fill="#f4f8fc"/>
<circle cx="269" cy="747" r="10" fill="#f4f4f4"/><circle cx="269" cy="747" r="8.3" fill="#38b448"/><path d="M259.5 757.5 L261.5 750.5 L265 754.5Z" fill="#f4f4f4"/>
<path d="M265.5 743.5 C265.5 749 269 752 273.5 751.5 L274 749.5 L271.5 748.5 L270 749.5 C268.5 749 267.5 747.5 267 746 L268 744.5 L267.5 742Z" fill="#f4f4f4"/>
<circle cx="319" cy="747.5" r="11" fill="#dd4438"/><path d="M319 747.5 L309.5 753 A11 11 0 0 1 313.5 738 Z" fill="#f2c230" transform="rotate(120 319 747.5)"/>
<path d="M319 747.5 L328.5 753 A11 11 0 0 1 309.5 753 Z" fill="#2ea84c"/><path d="M319 736.5 A11 11 0 0 1 330 747.5 L319 747.5Z" fill="#f2c230"/>
<circle cx="319" cy="747.5" r="5" fill="#f4f4f4"/><circle cx="319" cy="747.5" r="3.8" fill="#4a8af0"/>
<circle cx="367" cy="747.5" r="11" fill="#5a3aa0"/><path d="M365 740 L369 739 L367 745 L371 750 L368 755 L364 755 L366 749Z" fill="#f0f0f8"/>
<rect x="405" y="736" width="24" height="23" rx="2" fill="#4a9a20"/><path d="M424 741 L412 741 L412 754 L424 754" stroke="#eaf8d0" stroke-width="4" fill="none"/>
<circle cx="466" cy="748" r="11" fill="#f07a28"/><circle cx="467" cy="749" r="6" fill="#8a3ab8"/><path d="M458 742 C462 735 470 734 474 740 C470 738 466 739 464 743Z" fill="#f8c040"/>
<rect x="503" y="736" width="24" height="23" fill="#e8f4f4"/><text x="514.5" y="753" font-family="Liberation Sans" font-weight="bold" font-size="17" text-anchor="middle" fill="#28a0a8">3</text><text x="521" y="758" font-family="Liberation Sans" font-size="4.5" fill="#28a0a8">MAX</text>
<rect x="552" y="736" width="24" height="23" fill="#2a64b8"/><path d="M552 748 L560 741 L576 753 L576 759 L552 759Z" fill="#1a3a80"/><rect x="567" y="740" width="4" height="4" fill="#e8f0ff"/><path d="M552 751 L562 744 L576 755 L576 759 L552 759Z" fill="#5a9ae0"/>
<rect x="601" y="736" width="24" height="23" fill="#f0e0dc"/>
<path d="M610 739.5 L616.5 739.5 L622.5 756.5 L619 756.5 L617.7 752.5 L609 752.5 L607.5 756.5 L604 756.5Z M610 749.5 L616.5 749.5 L613.3 742Z" fill="#c03a2c" fill-rule="evenodd"/>
<path d="M1116 751 L1121 746 L1126 751" stroke="#f0f0f0" stroke-width="1.4" fill="none"/>
<g stroke="#f0f0f0" stroke-width="1.2" fill="none"><rect x="1139" y="742" width="14" height="10"/><path d="M1146 752 L1146 756 M1142 756 L1150 756"/><rect x="1137" y="741" width="4" height="5"/>
<path d="M1162 744.5 L1165 744.5 L1169 741 L1169 754 L1165 750.5 L1162 750.5Z"/><path d="M1171.5 744.5 C1173 746 1173 749 1171.5 750.5 M1174 742.5 C1176.5 745 1176.5 750 1174 752.5 M1176.5 740.5 C1180 744 1180 751 1176.5 754.5"/>
<rect x="1185.5" y="742" width="22.5" height="11"/><path d="M1188 745 L1205 745 M1188 747.5 L1205 747.5 M1191 750.5 L1202 750.5" stroke-dasharray="1.5 1"/>
<path d="M1326 740 L1341 740 L1341 751 L1336 751 L1333.5 754.5 L1331 751 L1326 751Z"/>
</g>
</svg>
<div class="t" style="left:1219.5px;top:742px;color:#f0f0f0;font-size:12.5px;transform:scaleX(0.8);transform-origin:0 0">ENG</div>
<div class="t" style="left:1253.5px;top:732px;color:#f0f0f0;font-size:13px;transform:scaleX(0.8);transform-origin:0 0">01:02</div>
<svg style="left:0;top:0" width="1364" height="640" viewBox="0 0 1364 640"><defs><clipPath id="vpc"><rect x="0" y="193" width="1364" height="444"/></clipPath></defs><g clip-path="url(#vpc)"><path d="M374.0 195.0 L575.5 195.0" stroke="#70747e" stroke-width="2" />
<rect x="353.5" y="192.0" width="18.8" height="7.5" fill="none" stroke="#686c78" stroke-width="1" />
<path d="M357.2 200.0 L365.2 200.0 L368.4 203.2 L368.4 228.2 L365.2 231.4 L357.2 231.4 L354.0 228.2 L354.0 203.2 Z" fill="#e2e3e7" stroke="#f2f2f4" stroke-width="0.9"/>
<path d="M353.4 199.4 L358.0 199.4 L353.4 204.0Z M369.0 199.4 L364.4 199.4 L369.0 204.0Z M369.0 232.0 L364.4 232.0 L369.0 227.4Z M353.4 232.0 L358.0 232.0 L353.4 227.4Z" fill="#a82828"/>
<rect x="352.5" y="231.5" width="18.0" height="139.0" fill="#1c1e26" />
<rect x="353.5" y="232.0" width="3.0" height="138.5" fill="#6a4a3a" />
<rect x="354.0" y="232.0" width="2.0" height="138.5" fill="#d8b898" />
<rect x="360.3" y="232.0" width="3.0" height="138.5" fill="#6a4a3a" />
<rect x="360.8" y="232.0" width="2.0" height="138.5" fill="#d8b898" />
<rect x="367.5" y="232.0" width="3.0" height="138.5" fill="#6a4a3a" />
<rect x="368.0" y="232.0" width="2.0" height="138.5" fill="#d8b898" />
<path d="M357.2 372.0 L365.1 372.0 L368.3 375.2 L368.3 405.8 L365.1 409.0 L357.2 409.0 L354.0 405.8 L354.0 375.2 Z" fill="#e2e3e7" stroke="#f2f2f4" stroke-width="0.9"/>
<path d="M353.4 371.4 L358.0 371.4 L353.4 376.0Z M368.9 371.4 L364.3 371.4 L368.9 376.0Z M368.9 409.6 L364.3 409.6 L368.9 405.0Z M353.4 409.6 L358.0 409.6 L353.4 405.0Z" fill="#a82828"/>
<path d="M371.0 404.0 L533.0 404.0 L536.0 407.0 L536.0 407.5 L533.0 410.5 L371.0 410.5 L368.0 407.5 L368.0 407.0 Z" fill="#e2e3e7" stroke="#f2f2f4" stroke-width="0.9"/>
<path d="M367.4 403.4 L371.8 403.4 L367.4 407.8Z M536.6 403.4 L532.2 403.4 L536.6 407.8Z M536.6 411.1 L532.2 411.1 L536.6 406.7Z M367.4 411.1 L371.8 411.1 L367.4 406.7Z" fill="#a82828"/>
<rect x="354.0" y="410.5" width="23.0" height="28.5" fill="none" stroke="#686c78" stroke-width="1" />
<path d="M358.2 439.0 L365.1 439.0 L368.3 442.2 L368.3 493.3 L365.1 496.5 L358.2 496.5 L355.0 493.3 L355.0 442.2 Z" fill="#e2e3e7" stroke="#f2f2f4" stroke-width="0.9"/>
<path d="M354.4 438.4 L359.0 438.4 L354.4 443.0Z M368.9 438.4 L364.3 438.4 L368.9 443.0Z M368.9 497.1 L364.3 497.1 L368.9 492.5Z M354.4 497.1 L359.0 497.1 L354.4 492.5Z" fill="#a82828"/>
<path d="M366.5 485.5 L390.5 485.5 L394.0 489.0 L394.0 493.0 L390.5 496.5 L366.5 496.5 L366.5 496.5 L366.5 485.5 Z" fill="#e2e3e7" stroke="#f2f2f4" stroke-width="0.9"/>
<path d="M394.6 484.9 L389.7 484.9 L394.6 489.8Z M394.6 497.1 L389.7 497.1 L394.6 492.2Z" fill="#a82828"/>
<rect x="356" y="486.5" width="12" height="9" fill="#e2e3e7"/>
<circle cx="368.3" cy="486.0" r="1.8" fill="#a82828"/>
<rect x="394.0" y="483.5" width="47.5" height="15.0" fill="#1c1e26" />
<rect x="394.0" y="483.5" width="47.5" height="2.5" fill="#cfae90" />
<rect x="394.0" y="490.5" width="47.5" height="2.5" fill="#cfae90" />
<rect x="394.0" y="496.2" width="47.5" height="2.5" fill="#777a84" />
<path d="M446.1 485.0 L449.8 485.0 L453.4 488.6 L453.4 493.4 L449.8 497.0 L446.1 497.0 L442.5 493.4 L442.5 488.6 Z" fill="#e2e3e7" stroke="#f2f2f4" stroke-width="0.9"/>
<path d="M441.9 484.4 L446.9 484.4 L441.9 489.4Z M454.0 484.4 L449.0 484.4 L454.0 489.4Z M454.0 497.6 L449.0 497.6 L454.0 492.6Z M441.9 497.6 L446.9 497.6 L441.9 492.6Z" fill="#a82828"/>
<rect x="354.0" y="497.0" width="87.0" height="49.6" fill="none" stroke="#686c78" stroke-width="1" />
<path d="M357.8 502.9 L437 502.9 L437 541.5 L380.5 541.5 L380.5 529.3 L357.8 529.3 Z" stroke="#4c2a28" stroke-width="2.8" fill="none"/>
<path d="M357.8 502.9 L437 502.9 L437 541.5 L380.5 541.5 L380.5 529.3 L357.8 529.3 Z" stroke="#d6b292" stroke-width="1.3" fill="none" stroke-dasharray="6 2"/>
<rect x="354.0" y="533.0" width="23.0" height="27.0" fill="none" stroke="#686c78" stroke-width="1" />
<path d="M440.7 497 L440.7 575.3 L546 575.3" stroke="#8a7a6c" stroke-width="1" fill="none" />
<path d="M443.2 497 L443.2 572.8 L546 572.8" stroke="#4c2a28" stroke-width="2.8" fill="none"/>
<path d="M443.2 497 L443.2 572.8 L546 572.8" stroke="#d6b292" stroke-width="1.3" fill="none" stroke-dasharray="6 2"/>
<path d="M424.3 546.6 L424.3 592.0 L546 592.0" stroke="#8a7a6c" stroke-width="1" fill="none" />
<path d="M426.8 546.6 L426.8 589.5 L546 589.5" stroke="#4c2a28" stroke-width="2.8" fill="none"/>
<path d="M426.8 546.6 L426.8 589.5 L546 589.5" stroke="#d6b292" stroke-width="1.3" fill="none" stroke-dasharray="6 2"/>
<path d="M408.5 546.6 L408.5 607.8 L546 607.8" stroke="#8a7a6c" stroke-width="1" fill="none" />
<path d="M411.0 546.6 L411.0 605.3 L546 605.3" stroke="#4c2a28" stroke-width="2.8" fill="none"/>
<path d="M411.0 546.6 L411.0 605.3 L546 605.3" stroke="#d6b292" stroke-width="1.3" fill="none" stroke-dasharray="6 2"/>
<path d="M377.0 546.6 L441.0 546.6" stroke="#686c78" stroke-width="1" />
<path d="M446.6 376.5 L447.4 376.5 L450.6 379.7 L450.6 400.8 L447.4 404.0 L446.6 404.0 L443.4 400.8 L443.4 379.7 Z" fill="#e2e3e7" stroke="#f2f2f4" stroke-width="0.9"/>
<path d="M442.8 375.9 L447.4 375.9 L442.8 380.5Z M451.2 375.9 L446.6 375.9 L451.2 380.5Z M451.2 404.6 L446.6 404.6 L451.2 400.0Z M442.8 404.6 L447.4 404.6 L442.8 400.0Z" fill="#a82828"/>
<path d="M450.6 376.5 L536.0 376.5" stroke="#686c78" stroke-width="1.2" />
<path d="M450.6 404.0 L536.0 376.5" stroke="#686c78" stroke-width="1.1" />
<path d="M539.2 369.0 L540.3 369.0 L543.5 372.2 L543.5 425.8 L540.3 429.0 L539.2 429.0 L536.0 425.8 L536.0 372.2 Z" fill="#e2e3e7" stroke="#f2f2f4" stroke-width="0.9"/>
<path d="M535.4 368.4 L540.0 368.4 L535.4 373.0Z M544.1 368.4 L539.5 368.4 L544.1 373.0Z M544.1 429.6 L539.5 429.6 L544.1 425.0Z M535.4 429.6 L540.0 429.6 L535.4 425.0Z" fill="#a82828"/>
<path d="M543.5 369.5 L565.4 369.5 L565.4 369.5 L565.4 375.5 L565.4 375.5 L543.5 375.5 L543.5 375.5 L543.5 369.5 Z" fill="#e2e3e7" stroke="#f2f2f4" stroke-width="0.9"/>
<path d="M566.8 242.8 L567.7 242.8 L570.9 246.0 L570.9 371.4 L567.7 374.6 L566.8 374.6 L563.6 371.4 L563.6 246.0 Z" fill="#e2e3e7" stroke="#f2f2f4" stroke-width="0.9"/>
<path d="M563.0 242.2 L567.6 242.2 L563.0 246.8Z M571.5 242.2 L566.9 242.2 L571.5 246.8Z M571.5 375.2 L566.9 375.2 L571.5 370.6Z M563.0 375.2 L567.6 375.2 L563.0 370.6Z" fill="#a82828"/>
<rect x="543.0" y="375.0" width="27.9" height="55.0" fill="none" stroke="#686c78" stroke-width="1" />
<path d="M546.5 380.5 L566.5 380.5 L566.5 424.5 L546.5 424.5 Z" stroke="#4c2a28" stroke-width="2.8" fill="none"/>
<path d="M546.5 380.5 L566.5 380.5 L566.5 424.5 L546.5 424.5 Z" stroke="#d6b292" stroke-width="1.3" fill="none" stroke-dasharray="4 2"/>
<rect x="531.2" y="484.0" width="27.8" height="14.0" fill="none" stroke="#686c78" stroke-width="1" />
<path d="M535.2 484.6 L558.0 484.6 L558.0 484.6 L558.0 497.4 L558.0 497.4 L535.2 497.4 L531.7 493.9 L531.7 488.1 Z" fill="#e2e3e7" stroke="#f2f2f4" stroke-width="0.9"/>
<path d="M531.1 484.0 L536.0 484.0 L531.1 488.9Z M531.1 498.0 L536.0 498.0 L531.1 493.1Z" fill="#a82828"/>
<path d="M546.3 485.0 L558.0 485.0 L558.0 485.0 L558.0 538.8 L554.8 542.0 L549.5 542.0 L546.3 538.8 L546.3 485.0 Z" fill="#e2e3e7" stroke="#f2f2f4" stroke-width="0.9"/>
<path d="M558.6 542.6 L554.0 542.6 L558.6 538.0Z M545.7 542.6 L550.3 542.6 L545.7 538.0Z" fill="#a82828"/>
<rect x="547" y="485.5" width="10.5" height="11.5" fill="#e2e3e7"/>
<circle cx="557.5" cy="485.2" r="2" fill="#a82828"/>
<circle cx="546.3" cy="497.4" r="1.8" fill="#a82828"/>
<rect x="544.0" y="542.5" width="16.0" height="69.5" fill="#1c1e26" />
<rect x="544.0" y="596.0" width="117.0" height="16.0" fill="#1c1e26" />
<path d="M558.9 542.5 L558.9 597.9 L661 597.9" stroke="#cfae90" stroke-width="2.6" fill="none" />
<path d="M552.3 542.5 L552.3 604.7 L661 604.7" stroke="#cfae90" stroke-width="2.6" fill="none" />
<path d="M545.7 542.5 L545.7 611" stroke="#cfae90" stroke-width="2.2" fill="none" />
<path d="M545.5 611.0 L545.5 637.0" stroke="#7c808c" stroke-width="1.4" />
<path d="M546.0 610.8 L661.0 610.8" stroke="#7a7d86" stroke-width="3" />
<path d="M549.2 616.4 L657 616.4 L657 634.8 L549.2 634.8 Z" stroke="#4c2a28" stroke-width="2.8" fill="none"/>
<path d="M549.2 616.4 L657 616.4 L657 634.8 L549.2 634.8 Z" stroke="#d6b292" stroke-width="1.3" fill="none" stroke-dasharray="6 2"/>
<path d="M665.2 599.5 L670.2 599.5 L673.4 602.7 L673.4 637.0 L673.4 637.0 L662.0 637.0 L662.0 637.0 L662.0 602.7 Z" fill="#e2e3e7" stroke="#f2f2f4" stroke-width="0.9"/>
<path d="M661.4 598.9 L666.0 598.9 L661.4 603.5Z M674.0 598.9 L669.4 598.9 L674.0 603.5Z" fill="#a82828"/>
<circle cx="678.6" cy="632.0" r="5" fill="#e2e3e7"/>
<circle cx="673.5" cy="627.0" r="1.8" fill="#a82828"/>
<circle cx="683.0" cy="627.0" r="1.8" fill="#a82828"/>
<circle cx="673.5" cy="636.0" r="1.8" fill="#a82828"/>
<rect x="685.8" y="622.0" width="47.2" height="15.0" fill="#1c1e26" />
<rect x="741.2" y="622.0" width="46.2" height="15.0" fill="#1c1e26" />
<rect x="685.8" y="625.0" width="47.2" height="2.5" fill="#cfae90" />
<rect x="685.8" y="631.2" width="47.2" height="2.5" fill="#cfae90" />
<path d="M685.8 622.0 L685.8 637.0" stroke="#8a8d96" stroke-width="1.2" />
<path d="M733.0 622.0 L733.0 637.0" stroke="#8a8d96" stroke-width="1.2" />
<rect x="741.2" y="625.0" width="46.2" height="2.5" fill="#cfae90" />
<rect x="741.2" y="631.2" width="46.2" height="2.5" fill="#cfae90" />
<path d="M741.2 622.0 L741.2 637.0" stroke="#8a8d96" stroke-width="1.2" />
<path d="M787.4 622.0 L787.4 637.0" stroke="#8a8d96" stroke-width="1.2" />
<circle cx="794.6" cy="632.0" r="5" fill="#e2e3e7"/>
<circle cx="789.5" cy="627.0" r="1.8" fill="#a82828"/>
<circle cx="799.0" cy="627.0" r="1.8" fill="#a82828"/>
<path d="M803.9 573.9 L808.8 573.9 L812.0 577.1 L812.0 637.0 L812.0 637.0 L800.7 637.0 L800.7 637.0 L800.7 577.1 Z" fill="#e2e3e7" stroke="#f2f2f4" stroke-width="0.9"/>
<path d="M800.1 573.3 L804.7 573.3 L800.1 577.9Z M812.6 573.3 L808.0 573.3 L812.6 577.9Z" fill="#a82828"/>
<rect x="792.5" y="544.0" width="21.5" height="27.8" fill="none" stroke="#686c78" stroke-width="1" />
<path d="M794.8 192.0 L794.8 424.6" stroke="#62666f" stroke-width="1.5" />
<path d="M812.8 192.0 L812.8 453.0" stroke="#62666f" stroke-width="1.5" />
<path d="M649.5 283.5 L728.0 372.0" stroke="#686c78" stroke-width="1.1" />
<path d="M728.0 283.5 L649.5 372.0" stroke="#686c78" stroke-width="1.1" />
<path d="M645.7 235.3 L646.3 235.3 L649.5 238.5 L649.5 374.8 L646.3 378.0 L645.7 378.0 L642.5 374.8 L642.5 238.5 Z" fill="#e2e3e7" stroke="#f2f2f4" stroke-width="0.9"/>
<path d="M641.9 234.7 L646.5 234.7 L641.9 239.3Z M650.1 234.7 L645.5 234.7 L650.1 239.3Z M650.1 378.6 L645.5 378.6 L650.1 374.0Z M641.9 378.6 L646.5 378.6 L641.9 374.0Z" fill="#a82828"/>
<path d="M652.5 276.7 L727.0 276.7 L730.0 279.7 L730.0 280.8 L727.0 283.8 L652.5 283.8 L649.5 280.8 L649.5 279.7 Z" fill="#e2e3e7" stroke="#f2f2f4" stroke-width="0.9"/>
<path d="M648.9 276.1 L653.3 276.1 L648.9 280.5Z M730.6 276.1 L726.2 276.1 L730.6 280.5Z M730.6 284.4 L726.2 284.4 L730.6 279.9Z M648.9 284.4 L653.3 284.4 L648.9 279.9Z" fill="#a82828"/>
<path d="M731.2 277.0 L731.2 277.0 L734.4 280.2 L734.4 374.8 L731.2 378.0 L731.2 378.0 L728.0 374.8 L728.0 280.2 Z" fill="#e2e3e7" stroke="#f2f2f4" stroke-width="0.9"/>
<path d="M727.4 276.4 L732.0 276.4 L727.4 281.0Z M735.0 276.4 L730.4 276.4 L735.0 281.0Z M735.0 378.6 L730.4 378.6 L735.0 374.0Z M727.4 378.6 L732.0 378.6 L727.4 374.0Z" fill="#a82828"/>
<path d="M664.5 374.9 L711.4 374.9" stroke="#7a7d86" stroke-width="3" />
<path d="M649.5 371.6 L661.5 371.6 L664.5 374.6 L664.5 375.0 L661.5 378.0 L649.5 378.0 L649.5 378.0 L649.5 371.6 Z" fill="#e2e3e7" stroke="#f2f2f4" stroke-width="0.9"/>
<path d="M665.1 371.0 L660.7 371.0 L665.1 375.4Z M665.1 378.6 L660.7 378.6 L665.1 374.2Z" fill="#a82828"/>
<path d="M714.4 371.6 L728.0 371.6 L728.0 371.6 L728.0 378.0 L728.0 378.0 L714.4 378.0 L711.4 375.0 L711.4 374.6 Z" fill="#e2e3e7" stroke="#f2f2f4" stroke-width="0.9"/>
<path d="M710.8 371.0 L715.2 371.0 L710.8 375.4Z M710.8 378.6 L715.2 378.6 L710.8 374.2Z" fill="#a82828"/>
<path d="M794 452 L794 246.6 L734.4 246.6 L734.4 541.7 L800.5 541.7" stroke="#686c78" stroke-width="1.2" fill="none" />
<circle cx="739.4" cy="238.4" r="2.6" fill="#6e727c"/>
<path d="M736 258.3 L794 258.3" stroke="#4c2a28" stroke-width="2.3" fill="none"/>
<path d="M736 258.3 L794 258.3" stroke="#d6b292" stroke-width="1.2" fill="none" stroke-dasharray="5 2.5"/>
<path d="M736.0 261.1 L794.0 261.1" stroke="#50545f" stroke-width="1" />
<circle cx="739.5" cy="252.3" r="2.1" fill="#50545e" stroke="#70747e" stroke-width="0.8"/>
<path d="M736 272.3 L794 272.3" stroke="#4c2a28" stroke-width="2.3" fill="none"/>
<path d="M736 272.3 L794 272.3" stroke="#d6b292" stroke-width="1.2" fill="none" stroke-dasharray="5 2.5"/>
<path d="M736.0 275.1 L794.0 275.1" stroke="#50545f" stroke-width="1" />
<circle cx="739.5" cy="266.3" r="2.1" fill="#50545e" stroke="#70747e" stroke-width="0.8"/>
<path d="M736 286.2 L794 286.2" stroke="#4c2a28" stroke-width="2.3" fill="none"/>
<path d="M736 286.2 L794 286.2" stroke="#d6b292" stroke-width="1.2" fill="none" stroke-dasharray="5 2.5"/>
<path d="M736.0 289.0 L794.0 289.0" stroke="#50545f" stroke-width="1" />
<circle cx="739.5" cy="280.2" r="2.1" fill="#50545e" stroke="#70747e" stroke-width="0.8"/>
<path d="M736 300.2 L794 300.2" stroke="#4c2a28" stroke-width="2.3" fill="none"/>
<path d="M736 300.2 L794 300.2" stroke="#d6b292" stroke-width="1.2" fill="none" stroke-dasharray="5 2.5"/>
<path d="M736.0 303.0 L794.0 303.0" stroke="#50545f" stroke-width="1" />
<circle cx="739.5" cy="294.2" r="2.1" fill="#50545e" stroke="#70747e" stroke-width="0.8"/>
<path d="M736 314.1 L794 314.1" stroke="#4c2a28" stroke-width="2.3" fill="none"/>
<path d="M736 314.1 L794 314.1" stroke="#d6b292" stroke-width="1.2" fill="none" stroke-dasharray="5 2.5"/>
<path d="M736.0 316.9 L794.0 316.9" stroke="#50545f" stroke-width="1" />
<circle cx="739.5" cy="308.1" r="2.1" fill="#50545e" stroke="#70747e" stroke-width="0.8"/>
<path d="M736 328.1 L794 328.1" stroke="#4c2a28" stroke-width="2.3" fill="none"/>
<path d="M736 328.1 L794 328.1" stroke="#d6b292" stroke-width="1.2" fill="none" stroke-dasharray="5 2.5"/>
<path d="M736.0 330.9 L794.0 330.9" stroke="#50545f" stroke-width="1" />
<circle cx="739.5" cy="322.1" r="2.1" fill="#50545e" stroke="#70747e" stroke-width="0.8"/>
<path d="M736 342.1 L794 342.1" stroke="#4c2a28" stroke-width="2.3" fill="none"/>
<path d="M736 342.1 L794 342.1" stroke="#d6b292" stroke-width="1.2" fill="none" stroke-dasharray="5 2.5"/>
<path d="M736.0 344.9 L794.0 344.9" stroke="#50545f" stroke-width="1" />
<circle cx="739.5" cy="336.1" r="2.1" fill="#50545e" stroke="#70747e" stroke-width="0.8"/>
<path d="M736 356.0 L794 356.0" stroke="#4c2a28" stroke-width="2.3" fill="none"/>
<path d="M736 356.0 L794 356.0" stroke="#d6b292" stroke-width="1.2" fill="none" stroke-dasharray="5 2.5"/>
<path d="M736.0 358.8 L794.0 358.8" stroke="#50545f" stroke-width="1" />
<circle cx="739.5" cy="350.0" r="2.1" fill="#50545e" stroke="#70747e" stroke-width="0.8"/>
<circle cx="739.5" cy="377.9" r="2.1" fill="#50545e" stroke="#70747e" stroke-width="0.8"/>
<path d="M736 397.9 L794 397.9" stroke="#4c2a28" stroke-width="2.3" fill="none"/>
<path d="M736 397.9 L794 397.9" stroke="#d6b292" stroke-width="1.2" fill="none" stroke-dasharray="5 2.5"/>
<path d="M736.0 400.7 L794.0 400.7" stroke="#50545f" stroke-width="1" />
<circle cx="739.5" cy="391.9" r="2.1" fill="#50545e" stroke="#70747e" stroke-width="0.8"/>
<path d="M736 411.9 L794 411.9" stroke="#4c2a28" stroke-width="2.3" fill="none"/>
<path d="M736 411.9 L794 411.9" stroke="#d6b292" stroke-width="1.2" fill="none" stroke-dasharray="5 2.5"/>
<path d="M736.0 414.7 L794.0 414.7" stroke="#50545f" stroke-width="1" />
<circle cx="739.5" cy="405.9" r="2.1" fill="#50545e" stroke="#70747e" stroke-width="0.8"/>
<path d="M736 425.8 L794 425.8" stroke="#4c2a28" stroke-width="2.3" fill="none"/>
<path d="M736 425.8 L794 425.8" stroke="#d6b292" stroke-width="1.2" fill="none" stroke-dasharray="5 2.5"/>
<path d="M736.0 428.6 L794.0 428.6" stroke="#50545f" stroke-width="1" />
<circle cx="739.5" cy="419.8" r="2.1" fill="#50545e" stroke="#70747e" stroke-width="0.8"/>
<path d="M736 439.8 L794 439.8" stroke="#4c2a28" stroke-width="2.3" fill="none"/>
<path d="M736 439.8 L794 439.8" stroke="#d6b292" stroke-width="1.2" fill="none" stroke-dasharray="5 2.5"/>
<path d="M736.0 442.6 L794.0 442.6" stroke="#50545f" stroke-width="1" />
<circle cx="739.5" cy="433.8" r="2.1" fill="#50545e" stroke="#70747e" stroke-width="0.8"/>
<path d="M736 453.7 L800.5 453.7" stroke="#4c2a28" stroke-width="2.3" fill="none"/>
<path d="M736 453.7 L800.5 453.7" stroke="#d6b292" stroke-width="1.2" fill="none" stroke-dasharray="5 2.5"/>
<path d="M736.0 456.5 L800.5 456.5" stroke="#50545f" stroke-width="1" />
<circle cx="739.5" cy="447.7" r="2.1" fill="#50545e" stroke="#70747e" stroke-width="0.8"/>
<path d="M736 467.7 L800.5 467.7" stroke="#4c2a28" stroke-width="2.3" fill="none"/>
<path d="M736 467.7 L800.5 467.7" stroke="#d6b292" stroke-width="1.2" fill="none" stroke-dasharray="5 2.5"/>
<path d="M736.0 470.5 L800.5 470.5" stroke="#50545f" stroke-width="1" />
<circle cx="739.5" cy="461.7" r="2.1" fill="#50545e" stroke="#70747e" stroke-width="0.8"/>
<path d="M736 481.7 L800.5 481.7" stroke="#4c2a28" stroke-width="2.3" fill="none"/>
<path d="M736 481.7 L800.5 481.7" stroke="#d6b292" stroke-width="1.2" fill="none" stroke-dasharray="5 2.5"/>
<path d="M736.0 484.5 L800.5 484.5" stroke="#50545f" stroke-width="1" />
<circle cx="739.5" cy="475.7" r="2.1" fill="#50545e" stroke="#70747e" stroke-width="0.8"/>
<path d="M736 495.6 L800.5 495.6" stroke="#4c2a28" stroke-width="2.3" fill="none"/>
<path d="M736 495.6 L800.5 495.6" stroke="#d6b292" stroke-width="1.2" fill="none" stroke-dasharray="5 2.5"/>
<path d="M736.0 498.4 L800.5 498.4" stroke="#50545f" stroke-width="1" />
<circle cx="739.5" cy="489.6" r="2.1" fill="#50545e" stroke="#70747e" stroke-width="0.8"/>
<path d="M736 509.6 L800.5 509.6" stroke="#4c2a28" stroke-width="2.3" fill="none"/>
<path d="M736 509.6 L800.5 509.6" stroke="#d6b292" stroke-width="1.2" fill="none" stroke-dasharray="5 2.5"/>
<path d="M736.0 512.4 L800.5 512.4" stroke="#50545f" stroke-width="1" />
<circle cx="739.5" cy="503.6" r="2.1" fill="#50545e" stroke="#70747e" stroke-width="0.8"/>
<path d="M736 523.5 L800.5 523.5" stroke="#4c2a28" stroke-width="2.3" fill="none"/>
<path d="M736 523.5 L800.5 523.5" stroke="#d6b292" stroke-width="1.2" fill="none" stroke-dasharray="5 2.5"/>
<path d="M736.0 526.3 L800.5 526.3" stroke="#50545f" stroke-width="1" />
<circle cx="739.5" cy="517.5" r="2.1" fill="#50545e" stroke="#70747e" stroke-width="0.8"/>
<path d="M736 537.5 L800.5 537.5" stroke="#4c2a28" stroke-width="2.3" fill="none"/>
<path d="M736 537.5 L800.5 537.5" stroke="#d6b292" stroke-width="1.2" fill="none" stroke-dasharray="5 2.5"/>
<path d="M736.0 540.3 L800.5 540.3" stroke="#50545f" stroke-width="1" />
<circle cx="739.5" cy="531.5" r="2.1" fill="#50545e" stroke="#70747e" stroke-width="0.8"/>
<path d="M739.0 295.5 L790.3 295.5 L793.3 298.5 L793.3 298.7 L790.3 301.7 L739.0 301.7 L736.0 298.7 L736.0 298.5 Z" fill="#e2e3e7" stroke="#f2f2f4" stroke-width="0.9"/>
<path d="M735.4 294.9 L739.8 294.9 L735.4 299.3Z M793.9 294.9 L789.5 294.9 L793.9 299.3Z M793.9 302.3 L789.5 302.3 L793.9 297.9Z M735.4 302.3 L739.8 302.3 L735.4 297.9Z" fill="#a82828"/>
<rect x="794.0" y="424.6" width="18.7" height="27.4" fill="none" stroke="#686c78" stroke-width="1" />
<path d="M804.0 453.8 L808.5 453.8 L811.7 456.9 L811.7 540.1 L808.5 543.3 L804.0 543.3 L800.8 540.1 L800.8 456.9 Z" fill="#e2e3e7" stroke="#f2f2f4" stroke-width="0.9"/>
<path d="M800.2 453.1 L804.8 453.1 L800.2 457.8Z M812.3 453.1 L807.7 453.1 L812.3 457.8Z M812.3 543.9 L807.7 543.9 L812.3 539.3Z M800.2 543.9 L804.8 543.9 L800.2 539.3Z" fill="#a82828"/></g><rect x="0" y="636.5" width="1364" height="1" fill="#474b57"/></svg>
<svg style="left:0;top:640px" width="1364" height="128" viewBox="0 640 1364 128"><path d="M45 652.3 L313 652.3 A28.5 25 0 0 1 341.5 677.3 L341.5 697.4 A28.5 26.3 0 0 1 313 723.7 L45 723.7 Z" fill="#ffffff"/><rect x="89.2" y="696.2" width="252.3" height="1.8" fill="#2a78a8"/><path transform="translate(90.1,666) scale(1.0364,0.9423)" d="M166.12 15.00 L164.62 16.50 L166.00 17.88 L166.25 17.88 L167.62 16.50ZM162.88 15.00 L161.38 16.50 L162.75 17.88 L162.88 17.88 L164.25 16.50 L164.25 16.38ZM180.38 17.50 L180.75 18.75 L181.75 18.62 L181.88 18.50 L182.88 18.25 L183.25 18.00 L183.50 18.00 L184.00 17.75 L185.25 16.88 L185.75 16.38 L186.38 15.50 L186.88 14.50 L187.00 13.88 L187.25 13.50 L189.62 13.50 L189.75 13.38 L190.88 13.25 L191.62 12.88 L192.38 12.12 L192.62 12.50 L193.25 13.00 L194.50 13.50 L196.75 13.50 L196.88 13.38 L197.38 13.38 L198.38 12.88 L199.00 12.25 L199.12 12.25 L200.25 13.25 L200.88 13.38 L201.00 13.50 L202.25 13.50 L202.38 13.38 L202.88 13.38 L203.75 12.88 L204.38 12.25 L204.50 12.25 L205.38 13.12 L205.88 13.38 L206.25 13.38 L206.38 13.50 L207.62 13.50 L207.75 13.38 L208.12 13.38 L208.62 13.12 L209.50 12.25 L209.88 11.50 L209.88 11.12 L210.12 10.50 L210.12 9.38 L210.25 9.25 L210.25 8.75 L210.12 8.62 L210.12 7.50 L210.00 7.38 L209.88 6.25 L209.75 6.00 L209.25 6.25 L208.88 6.25 L208.75 6.38 L208.38 6.38 L207.75 6.62 L207.88 7.50 L208.00 7.62 L208.00 8.12 L208.12 8.25 L208.12 10.12 L208.00 10.25 L208.00 10.50 L207.62 11.00 L207.00 11.12 L206.88 11.25 L206.12 11.00 L205.62 10.25 L205.62 9.88 L205.50 9.75 L205.50 8.62 L205.38 8.50 L205.38 7.25 L203.38 7.50 L203.38 10.25 L203.12 10.75 L202.62 11.12 L202.25 11.12 L202.12 11.25 L201.25 11.12 L200.50 10.50 L200.25 10.00 L200.12 7.50 L200.00 7.25 L199.75 7.25 L199.62 7.38 L198.00 7.50 L198.00 7.75 L198.12 7.88 L198.12 10.00 L198.00 10.12 L198.00 10.38 L197.38 11.00 L197.12 11.12 L196.00 11.12 L195.88 11.25 L195.50 11.25 L195.38 11.12 L194.50 11.12 L194.00 10.88 L193.50 10.12 L193.25 7.00 L192.00 7.12 L191.88 7.25 L191.25 7.25 L191.38 9.62 L191.25 9.75 L191.25 10.12 L190.88 10.75 L190.12 11.12 L189.38 11.12 L189.25 11.25 L188.38 11.25 L188.25 11.12 L187.88 11.12 L187.75 11.25 L187.50 11.25 L187.25 11.00 L187.25 10.12 L187.12 10.00 L187.00 9.00 L186.25 7.38 L185.38 6.50 L184.50 6.00 L184.12 6.00 L184.00 5.88 L182.88 5.88 L182.75 6.00 L182.38 6.00 L181.75 6.38 L180.88 7.25 L180.75 7.62 L180.38 8.12 L180.38 8.38 L180.12 8.88 L180.12 9.38 L180.00 9.50 L180.00 11.00 L180.12 11.12 L180.12 11.50 L180.50 12.25 L181.12 12.88 L181.62 13.12 L181.88 13.12 L182.38 13.38 L182.88 13.38 L183.00 13.50 L184.88 13.50 L185.00 13.75 L184.75 14.25 L183.38 15.50 L182.12 16.12 L181.88 16.12 L181.00 16.50 L180.00 16.62ZM182.75 8.38 L183.62 8.12 L184.25 8.38 L184.62 8.75 L185.12 9.88 L185.12 10.38 L185.25 10.50 L185.25 11.12 L185.12 11.25 L182.75 11.12 L182.12 10.62 L182.00 10.38 L182.12 9.25 L182.38 8.75ZM167.88 6.00 L167.50 6.00 L167.38 6.12 L167.00 6.12 L166.88 6.25 L166.50 6.25 L166.38 6.38 L165.75 6.50 L165.88 7.38 L166.00 7.50 L166.00 8.00 L166.12 8.12 L166.12 10.12 L165.88 10.62 L165.38 11.12 L164.75 11.12 L164.62 11.25 L162.00 11.25 L161.88 11.12 L161.12 11.25 L160.88 10.88 L160.75 9.38 L160.12 7.75 L159.38 6.75 L158.50 6.12 L157.75 6.00 L157.62 5.88 L156.62 5.88 L156.50 6.00 L156.12 6.00 L155.25 6.50 L154.38 7.50 L153.88 8.62 L153.75 9.62 L153.62 9.75 L153.62 10.62 L153.75 10.75 L153.75 11.38 L153.88 11.50 L153.88 11.75 L154.12 12.25 L154.62 12.75 L155.25 13.12 L155.50 13.12 L156.00 13.38 L156.50 13.38 L156.62 13.50 L158.50 13.50 L158.62 13.62 L158.62 13.88 L158.25 14.50 L157.62 15.12 L156.88 15.62 L155.12 16.38 L153.75 16.62 L153.75 17.00 L154.12 17.75 L154.38 18.75 L154.88 18.75 L155.00 18.62 L155.38 18.62 L155.50 18.50 L156.50 18.25 L156.88 18.00 L157.12 18.00 L158.75 17.00 L159.62 16.12 L160.12 15.38 L160.88 13.50 L165.50 13.50 L165.62 13.38 L166.38 13.25 L167.12 12.75 L167.88 11.62 L168.00 10.88 L168.12 10.75 L168.12 10.12 L168.25 10.00 L168.25 8.12 L168.12 8.00 L168.12 7.12 L168.00 7.00 L168.00 6.38 L167.88 6.25ZM156.38 8.38 L157.25 8.12 L157.88 8.38 L158.38 8.88 L158.88 10.25 L158.88 11.12 L158.75 11.25 L156.50 11.12 L156.38 11.00 L156.12 11.00 L155.75 10.62 L155.75 10.38 L155.62 10.25 L155.75 9.38 L155.88 9.25 L155.88 9.00ZM104.00 6.00 L103.62 6.00 L103.50 5.88 L102.38 5.88 L102.25 6.00 L101.62 6.12 L100.38 7.25 L99.62 8.75 L99.62 9.25 L99.50 9.38 L99.50 11.12 L99.88 12.12 L100.38 12.62 L100.38 12.75 L100.75 12.88 L101.25 13.25 L102.12 13.38 L102.25 13.50 L103.75 13.50 L103.88 13.38 L104.38 13.38 L104.50 13.50 L104.00 14.50 L103.38 15.12 L102.62 15.62 L101.88 16.00 L101.25 16.12 L100.88 16.38 L99.50 16.62 L99.50 16.88 L99.75 17.25 L99.75 17.50 L100.25 18.75 L102.25 18.25 L102.62 18.00 L102.88 18.00 L103.38 17.75 L103.62 17.50 L104.38 17.12 L105.88 15.50 L106.62 13.62 L106.62 13.00 L106.75 12.88 L106.75 10.25 L106.62 10.12 L106.62 9.50 L106.38 9.00 L106.38 8.62 L105.62 7.25 L104.75 6.38ZM102.38 8.25 L102.62 8.12 L103.25 8.12 L103.75 8.38 L104.12 8.75 L104.50 9.50 L104.62 10.38 L104.75 10.50 L104.75 10.88 L104.50 11.12 L102.88 11.25 L102.75 11.12 L102.25 11.12 L101.62 10.75 L101.50 10.50 L101.50 9.62 L101.62 9.50 L101.62 9.12ZM16.12 17.50 L16.50 18.75 L17.50 18.62 L17.62 18.50 L18.62 18.25 L19.00 18.00 L19.25 18.00 L20.50 17.25 L21.50 16.38 L22.12 15.50 L22.62 14.50 L22.75 13.88 L23.00 13.50 L24.62 13.50 L24.75 13.38 L25.25 13.38 L26.12 12.88 L26.88 12.12 L28.38 13.25 L28.88 13.38 L29.25 13.62 L29.62 13.62 L29.75 13.75 L31.12 13.75 L31.25 13.62 L32.00 13.50 L33.00 12.62 L33.38 12.00 L33.38 11.75 L33.62 11.25 L33.75 9.75 L33.62 9.62 L33.50 8.50 L32.88 7.38 L32.12 6.62 L31.38 6.25 L30.62 6.12 L30.50 6.00 L29.38 6.00 L29.25 6.12 L28.88 6.12 L28.00 6.62 L27.25 7.38 L26.62 8.25 L25.50 10.25 L24.75 11.00 L24.50 11.12 L23.62 11.12 L23.50 11.25 L23.25 11.25 L23.00 11.00 L23.00 10.12 L22.88 10.00 L22.75 9.00 L22.00 7.38 L21.12 6.50 L20.25 6.00 L19.88 6.00 L19.75 5.88 L18.62 5.88 L18.50 6.00 L18.12 6.00 L17.50 6.38 L16.62 7.25 L16.50 7.62 L16.12 8.12 L16.12 8.38 L15.88 8.88 L15.88 9.38 L15.75 9.50 L15.75 11.00 L15.88 11.12 L15.88 11.50 L16.25 12.25 L16.88 12.88 L17.38 13.12 L17.62 13.12 L18.12 13.38 L18.62 13.38 L18.75 13.50 L20.62 13.50 L20.75 13.75 L20.50 14.25 L19.12 15.50 L17.88 16.12 L17.62 16.12 L16.75 16.50 L15.75 16.62ZM29.50 8.25 L30.62 8.25 L31.00 8.50 L31.50 9.12 L31.50 9.38 L31.62 9.50 L31.62 10.62 L31.12 11.38 L30.88 11.38 L30.75 11.50 L30.12 11.50 L30.00 11.38 L29.75 11.38 L28.88 10.88 L28.12 10.25 L28.12 9.88 L28.38 9.62 L28.50 9.25ZM18.50 8.38 L19.38 8.12 L20.00 8.38 L20.38 8.75 L20.88 9.88 L20.88 10.38 L21.00 10.50 L21.00 11.12 L20.88 11.25 L18.50 11.12 L17.88 10.62 L17.75 10.38 L17.88 9.25 L18.12 8.75ZM71.25 7.50 L70.38 7.50 L70.25 7.38 L69.88 7.38 L69.75 7.25 L69.38 7.25 L69.25 7.12 L68.62 7.00 L66.88 6.12 L66.62 6.12 L66.00 5.75 L65.75 5.75 L65.12 5.38 L64.88 5.38 L64.38 5.12 L64.00 5.12 L63.88 5.00 L62.75 5.00 L61.75 5.38 L60.88 6.00 L60.38 6.50 L59.50 7.75 L59.50 8.00 L60.38 8.50 L60.62 8.50 L61.25 8.88 L62.50 7.50 L63.12 7.25 L63.75 7.25 L67.50 8.75 L67.25 9.00 L64.25 10.38 L64.00 10.38 L62.75 10.88 L62.38 10.88 L62.25 11.00 L61.75 11.00 L61.62 11.12 L60.12 11.12 L60.00 11.25 L58.75 11.25 L58.62 11.12 L58.25 11.12 L58.12 11.25 L57.25 10.88 L57.00 10.62 L56.75 10.12 L56.75 9.62 L56.62 9.50 L56.62 7.88 L56.50 7.75 L56.50 7.00 L55.25 7.12 L55.12 7.25 L54.50 7.25 L54.50 8.00 L54.62 8.12 L54.62 9.50 L54.38 10.12 L53.88 10.62 L53.38 10.88 L53.00 10.88 L52.38 11.12 L51.25 11.12 L51.12 11.25 L48.25 11.25 L48.12 11.12 L45.88 11.12 L45.75 11.00 L45.12 11.00 L45.00 10.88 L44.25 10.75 L43.75 10.50 L43.00 9.75 L42.75 9.12 L42.75 8.25 L42.88 8.12 L42.88 7.62 L43.00 7.50 L43.12 6.62 L42.62 6.38 L42.00 6.25 L41.62 6.00 L41.25 6.00 L41.12 6.25 L41.12 6.50 L40.88 7.00 L40.88 7.50 L40.75 7.62 L40.75 8.62 L40.62 8.88 L40.75 9.00 L40.75 10.00 L40.88 10.12 L40.88 10.50 L41.50 11.62 L42.38 12.38 L43.38 12.88 L43.62 12.88 L44.12 13.12 L44.50 13.12 L44.62 13.25 L46.62 13.38 L46.75 13.50 L51.25 13.50 L51.38 13.38 L52.38 13.38 L52.50 13.25 L53.75 13.00 L54.88 12.38 L55.38 11.88 L56.38 13.00 L57.12 13.38 L57.62 13.38 L57.75 13.50 L61.12 13.50 L61.25 13.38 L62.00 13.38 L62.12 13.25 L62.62 13.25 L62.75 13.12 L63.62 13.00 L64.00 12.75 L64.62 12.62 L65.50 12.12 L65.75 12.12 L69.25 10.25 L69.50 10.25 L70.25 9.88 L71.25 9.75ZM115.50 5.12 L114.25 6.38 L113.62 7.50 L115.38 8.38 L116.50 7.12 L117.38 6.75 L117.88 6.75 L118.00 6.88 L119.38 7.25 L119.75 7.50 L120.00 7.50 L120.62 7.88 L120.50 8.00 L119.12 8.38 L118.75 8.62 L118.50 8.62 L116.88 9.50 L115.75 10.50 L115.62 10.50 L114.62 11.75 L113.88 13.62 L113.75 15.50 L113.88 15.62 L114.00 16.75 L114.25 17.12 L114.25 17.38 L114.75 18.12 L115.62 19.00 L117.00 19.75 L117.75 19.88 L117.88 20.00 L118.50 20.00 L118.62 20.12 L119.50 20.12 L119.62 20.25 L121.75 20.25 L121.88 20.12 L122.62 20.12 L122.75 20.00 L123.38 20.00 L123.50 19.88 L124.50 19.75 L125.75 19.25 L125.50 18.75 L125.50 18.38 L125.25 17.88 L125.12 17.12 L123.75 17.62 L122.75 17.75 L122.62 17.88 L122.00 17.88 L121.88 18.00 L119.12 18.00 L119.00 17.88 L118.50 17.88 L118.38 17.75 L117.75 17.62 L116.75 17.00 L116.12 16.25 L115.88 15.62 L115.88 14.00 L116.12 13.62 L116.12 13.38 L116.62 12.62 L117.50 11.75 L118.62 11.00 L119.88 10.38 L120.12 10.38 L121.75 9.75 L122.62 9.62 L122.75 9.50 L124.00 9.38 L124.12 9.25 L125.12 9.25 L125.38 9.12 L125.38 7.00 L124.00 6.88 L123.88 6.75 L122.50 6.38 L120.50 5.38 L120.25 5.38 L119.62 5.00 L119.38 5.00 L119.00 4.75 L118.25 4.62 L118.12 4.50 L117.00 4.50 L116.88 4.62 L116.12 4.75ZM172.88 3.50 L171.88 5.50 L173.25 6.25 L174.62 7.25 L175.75 8.50 L176.12 9.38 L176.12 9.75 L176.00 9.88 L176.00 10.12 L175.50 10.62 L174.38 11.12 L173.75 11.12 L173.62 11.25 L171.75 11.25 L171.62 11.12 L170.62 11.12 L170.50 11.00 L170.12 11.00 L170.12 13.25 L170.38 13.38 L171.25 13.38 L171.38 13.50 L173.75 13.50 L173.88 13.38 L174.62 13.38 L174.75 13.25 L175.62 13.12 L176.25 12.88 L177.00 12.38 L177.38 12.00 L178.00 10.88 L178.00 10.38 L178.12 10.25 L178.12 8.75 L178.00 8.62 L177.88 7.88 L177.25 6.75 L176.75 6.25 L176.75 6.12 L175.50 5.00 L174.00 4.00ZM50.50 3.38 L49.00 4.88 L50.38 6.25 L50.62 6.25 L51.88 5.00 L51.88 4.75ZM47.12 3.38 L45.75 4.88 L47.12 6.25 L47.25 6.25 L48.62 4.88 L48.62 4.75 L47.25 3.38ZM192.12 2.38 L190.75 3.75 L190.75 3.88 L192.12 5.25 L192.25 5.25 L193.62 3.88 L193.62 3.75 L192.25 2.38ZM189.00 2.38 L188.88 2.38 L187.50 3.75 L187.50 3.88 L188.88 5.25 L190.38 3.75ZM64.38 0.50 L62.88 2.00 L64.38 3.50 L64.50 3.50 L65.88 2.12 L65.88 1.88 L64.50 0.50ZM212.62 0.00 L212.62 13.50 L214.75 13.50 L214.75 0.00ZM146.25 7.00 L145.25 5.88 L144.38 5.38 L143.50 5.25 L143.38 5.12 L142.12 5.12 L142.00 5.25 L141.62 5.25 L140.38 5.75 L139.50 6.38 L138.75 7.12 L138.62 7.00 L138.62 0.00 L136.50 0.00 L136.50 10.12 L135.62 11.25 L134.75 11.25 L134.62 11.12 L134.00 11.25 L133.38 11.00 L132.75 10.25 L132.75 10.00 L132.50 9.62 L132.12 7.75 L132.00 7.62 L130.00 8.25 L129.88 8.38 L130.25 9.25 L130.25 9.62 L130.50 10.25 L130.50 10.75 L130.62 10.88 L130.62 11.75 L130.75 11.88 L130.50 13.75 L130.00 14.62 L129.00 15.62 L128.12 16.12 L127.88 16.12 L127.50 16.38 L127.25 16.38 L126.75 16.62 L126.38 16.62 L126.25 16.75 L127.00 18.75 L127.38 18.75 L127.50 18.62 L127.88 18.62 L128.00 18.50 L128.62 18.38 L129.88 17.75 L130.38 17.38 L131.38 16.38 L132.12 15.12 L132.12 14.88 L132.38 14.50 L132.62 13.25 L132.75 13.12 L133.75 13.50 L140.75 13.50 L140.88 13.38 L142.62 13.25 L142.75 13.12 L143.12 13.12 L144.75 12.50 L146.12 11.25 L146.50 10.50 L146.75 8.88 L146.62 8.75 L146.62 8.00ZM144.50 8.50 L144.50 8.88 L144.62 9.00 L144.50 9.75 L144.12 10.25 L143.25 10.75 L142.50 10.88 L142.38 11.00 L141.75 11.00 L141.62 11.12 L139.50 11.12 L139.38 11.25 L138.38 11.25 L138.25 11.12 L138.38 10.75 L139.00 9.88 L140.75 8.12 L141.62 7.62 L142.38 7.50 L142.50 7.38 L143.50 7.50 L143.75 7.62ZM73.50 0.00 L73.50 9.88 L73.62 10.00 L73.75 11.12 L74.12 12.00 L74.38 12.38 L75.12 13.00 L75.62 13.25 L76.75 13.38 L76.88 13.50 L79.00 13.50 L79.12 13.38 L79.62 13.38 L80.25 13.12 L81.25 12.25 L81.38 12.25 L82.50 13.25 L82.75 13.25 L83.25 13.50 L84.50 13.50 L84.62 13.38 L85.50 13.25 L86.62 12.25 L86.88 12.25 L87.00 12.50 L87.88 13.25 L88.12 13.25 L88.62 13.50 L89.88 13.50 L90.88 13.12 L91.50 12.62 L92.00 11.88 L92.00 11.62 L92.25 11.12 L92.25 10.75 L92.38 10.62 L92.38 9.88 L92.50 9.75 L92.50 8.25 L92.38 8.12 L92.38 7.25 L92.25 7.12 L92.12 6.12 L91.62 6.12 L91.50 6.25 L91.12 6.25 L91.00 6.38 L90.62 6.38 L90.00 6.62 L90.12 6.88 L90.12 7.38 L90.25 7.50 L90.25 8.00 L90.38 8.12 L90.38 9.25 L90.50 9.50 L90.38 9.62 L90.38 10.25 L90.12 10.75 L89.75 11.12 L89.25 11.12 L89.00 11.25 L88.38 11.00 L88.12 10.75 L87.88 10.25 L87.88 9.75 L87.75 9.62 L87.62 7.25 L86.38 7.38 L86.25 7.50 L85.62 7.50 L85.62 8.75 L85.75 8.88 L85.62 10.38 L85.50 10.62 L84.88 11.12 L84.62 11.12 L84.50 11.25 L83.50 11.12 L82.75 10.50 L82.50 9.88 L82.38 7.25 L80.38 7.50 L80.38 10.12 L79.88 10.88 L79.38 11.12 L78.38 11.12 L78.25 11.25 L77.88 11.25 L77.75 11.12 L77.25 11.12 L77.12 11.25 L77.00 11.12 L76.38 11.00 L75.88 10.50 L75.75 9.75 L75.62 9.62 L75.62 0.00ZM0.00 0.00 L0.00 9.88 L0.12 10.00 L0.12 10.62 L0.25 10.75 L0.38 11.50 L0.88 12.38 L1.62 13.00 L2.12 13.25 L3.25 13.38 L3.38 13.50 L4.75 13.50 L4.88 13.38 L5.38 13.38 L6.12 13.00 L7.00 12.25 L7.25 12.25 L8.12 13.00 L9.12 13.50 L9.88 13.62 L10.00 13.75 L11.38 13.75 L11.50 13.62 L11.88 13.62 L12.88 13.00 L13.38 12.38 L13.88 11.00 L13.88 9.25 L13.75 9.12 L13.75 8.75 L13.25 7.62 L12.62 6.88 L11.62 6.25 L10.88 6.12 L10.75 6.00 L9.50 6.00 L9.38 6.12 L8.75 6.25 L8.00 6.75 L8.00 6.88 L7.25 7.62 L6.62 8.75 L6.38 9.00 L6.25 9.38 L6.00 9.62 L5.88 10.00 L5.12 10.88 L4.62 11.12 L3.75 11.12 L3.62 11.25 L3.50 11.12 L2.88 11.00 L2.38 10.50 L2.25 9.75 L2.12 9.62 L2.12 0.00ZM9.75 8.25 L10.75 8.25 L11.00 8.38 L11.75 9.25 L11.88 10.38 L11.62 11.00 L11.00 11.50 L10.25 11.50 L8.88 10.75 L8.25 10.12 L8.88 9.00Z" fill="#161616"/><path transform="translate(93.7,702.3) scale(1.1707,0.9877)" d="M27.75 5.75 L27.75 7.00 L32.62 7.00 L32.62 5.75ZM96.00 0.12 L89.25 0.12 L89.25 1.38 L94.12 1.38 L94.25 1.50 L90.38 9.88 L92.12 9.88 L92.50 9.25 L92.50 9.00 L93.00 8.12 L93.00 7.88 L93.38 7.25 L93.38 7.00 L94.25 5.25 L94.25 5.00 L95.12 3.25 L95.12 3.00 L96.00 1.25ZM80.00 0.12 L73.25 0.12 L73.25 1.38 L78.12 1.38 L78.25 1.50 L74.38 9.88 L76.12 9.88 L76.50 9.25 L76.50 9.00 L77.00 8.12 L77.00 7.88 L77.38 7.25 L77.38 7.00 L78.25 5.25 L78.25 5.00 L79.12 3.25 L79.12 3.00 L80.00 1.25ZM62.75 0.12 L62.75 1.12 L62.62 1.25 L62.62 2.25 L62.50 2.38 L62.50 3.38 L62.38 3.50 L62.38 4.50 L62.25 4.62 L62.25 5.00 L63.00 5.12 L63.12 5.25 L63.75 5.25 L64.12 4.88 L64.38 4.88 L64.50 4.75 L65.50 4.75 L66.00 5.00 L66.50 5.50 L66.75 6.00 L66.75 7.38 L66.50 8.00 L65.88 8.62 L65.50 8.62 L65.38 8.75 L65.00 8.75 L64.38 8.50 L63.88 8.00 L63.62 7.25 L62.00 7.25 L62.12 8.12 L62.38 8.62 L63.12 9.38 L63.75 9.75 L64.00 9.75 L64.50 10.00 L66.00 10.00 L66.12 9.88 L66.50 9.88 L67.38 9.38 L68.12 8.50 L68.12 8.25 L68.38 7.75 L68.38 7.25 L68.50 7.12 L68.50 6.12 L68.38 6.00 L68.38 5.62 L68.25 5.50 L68.12 4.88 L67.50 4.12 L66.62 3.62 L66.25 3.62 L66.12 3.50 L65.00 3.50 L64.00 3.88 L63.88 3.75 L64.00 3.62 L64.12 1.62 L64.25 1.50 L68.12 1.50 L68.12 0.12ZM50.50 0.12 L50.00 0.12 L49.62 0.38 L48.25 0.75 L47.88 1.00 L47.62 1.00 L46.38 1.50 L46.38 2.88 L46.50 2.75 L47.88 2.38 L48.62 2.00 L48.75 2.12 L48.75 9.88 L50.50 9.88ZM44.50 0.12 L37.62 0.12 L37.62 1.38 L42.62 1.38 L42.75 1.50 L42.00 2.88 L42.00 3.12 L41.25 4.50 L41.25 4.75 L40.50 6.12 L40.50 6.38 L39.88 7.50 L39.88 7.75 L39.12 9.12 L39.12 9.38 L38.88 9.88 L40.62 9.88 L41.00 9.12 L41.00 8.88 L41.38 8.25 L41.38 8.00 L41.88 7.12 L41.88 6.88 L42.25 6.25 L42.25 6.00 L43.12 4.25 L43.12 4.00 L43.62 3.12 L43.62 2.88 L44.00 2.25 L44.00 2.00 L44.50 1.12ZM20.62 0.12 L20.25 0.12 L16.50 1.50 L16.50 2.75 L16.88 2.75 L18.50 2.12 L18.75 2.12 L18.88 2.25 L18.88 9.88 L20.62 9.88ZM99.88 0.00 L98.75 0.50 L98.00 1.38 L97.88 1.88 L97.62 2.25 L97.62 2.75 L97.50 2.88 L97.50 7.00 L97.62 7.12 L97.75 8.00 L98.12 8.75 L99.00 9.62 L99.62 9.88 L100.00 9.88 L100.12 10.00 L101.25 10.00 L102.62 9.50 L103.25 8.88 L103.62 8.12 L103.62 7.88 L103.88 7.38 L103.88 6.50 L104.00 6.38 L104.00 3.50 L103.88 3.38 L103.88 2.62 L103.75 2.50 L103.62 1.75 L103.38 1.25 L102.50 0.38 L101.50 0.00ZM100.38 1.25 L101.12 1.25 L101.38 1.38 L102.00 2.00 L102.00 2.25 L102.25 2.75 L102.25 7.12 L101.88 8.12 L101.50 8.50 L100.88 8.75 L100.00 8.50 L99.50 8.00 L99.25 7.38 L99.25 6.88 L99.12 6.75 L99.12 3.12 L99.25 3.00 L99.25 2.50 L99.50 1.88 L99.88 1.50ZM83.62 0.00 L83.25 0.25 L82.75 0.38 L81.75 1.25 L81.38 2.12 L81.38 2.50 L83.12 2.50 L83.25 1.88 L83.62 1.50 L84.12 1.25 L85.00 1.25 L85.12 1.38 L85.38 1.38 L86.00 2.00 L86.12 2.88 L86.00 3.00 L85.88 3.62 L85.50 4.00 L85.00 4.25 L83.50 4.25 L83.50 5.50 L84.88 5.50 L85.50 5.75 L86.12 6.38 L86.12 6.62 L86.25 6.75 L86.25 7.50 L86.12 7.62 L86.12 7.88 L85.75 8.38 L85.38 8.62 L85.00 8.62 L84.88 8.75 L83.88 8.62 L83.12 8.00 L83.00 7.38 L81.25 7.38 L81.25 7.62 L81.38 7.75 L81.50 8.50 L82.25 9.38 L83.25 9.88 L83.75 9.88 L83.88 10.00 L85.75 9.88 L86.75 9.50 L87.50 8.75 L87.88 8.00 L87.88 6.50 L87.62 5.88 L87.00 5.25 L86.25 4.88 L86.50 4.62 L86.88 4.50 L87.38 4.00 L87.75 3.25 L87.75 2.00 L87.38 1.12 L86.88 0.62 L86.25 0.25 L86.00 0.25 L85.50 0.00ZM56.25 0.00 L55.12 0.50 L54.75 0.88 L54.12 2.00 L54.00 3.00 L53.88 3.12 L53.88 6.75 L54.00 6.88 L54.00 7.50 L54.12 7.62 L54.25 8.25 L54.50 8.75 L55.25 9.50 L56.00 9.88 L56.50 9.88 L56.62 10.00 L57.75 10.00 L59.00 9.50 L59.75 8.75 L60.00 8.25 L60.00 8.00 L60.25 7.50 L60.25 6.88 L60.38 6.75 L60.38 3.25 L60.25 3.12 L60.12 2.00 L59.75 1.25 L59.25 0.62 L58.00 0.00ZM56.75 1.25 L57.50 1.25 L58.12 1.62 L58.62 2.62 L58.62 3.62 L58.75 3.75 L58.75 6.12 L58.62 6.25 L58.62 7.25 L58.50 7.38 L58.38 8.00 L57.88 8.50 L57.25 8.75 L56.38 8.50 L55.88 8.00 L55.88 7.75 L55.62 7.25 L55.62 6.25 L55.50 6.12 L55.50 3.62 L55.62 3.50 L55.62 2.62 L56.12 1.62ZM9.38 0.38 L9.00 0.62 L8.25 1.50 L8.00 2.12 L7.88 3.00 L9.62 3.00 L9.75 2.12 L10.25 1.50 L10.88 1.25 L11.62 1.25 L11.88 1.38 L12.62 2.25 L12.62 3.38 L12.25 4.12 L11.38 5.12 L11.38 5.25 L8.12 8.62 L8.12 9.88 L14.75 9.88 L14.75 8.62 L10.50 8.62 L10.38 8.50 L10.38 8.38 L13.38 5.12 L14.12 3.88 L14.25 3.12 L14.38 3.00 L14.38 2.12 L14.00 1.12 L13.25 0.38 L12.25 0.00 L10.25 0.00ZM2.50 0.00 L1.50 0.38 L0.75 1.12 L0.25 2.25 L0.25 2.62 L0.12 2.75 L0.12 4.00 L0.00 4.12 L0.12 7.25 L0.62 8.62 L1.25 9.38 L1.88 9.75 L2.62 9.88 L2.75 10.00 L3.88 10.00 L5.25 9.50 L5.75 9.00 L6.25 8.12 L6.38 7.25 L6.50 7.12 L6.50 2.75 L6.38 2.62 L6.25 1.88 L5.88 1.12 L5.12 0.38 L4.12 0.00ZM3.00 1.25 L3.62 1.25 L3.75 1.38 L4.00 1.38 L4.50 1.88 L4.75 2.38 L4.75 2.88 L4.88 3.00 L4.88 7.00 L4.75 7.12 L4.75 7.50 L4.62 7.62 L4.62 7.88 L4.12 8.50 L3.50 8.62 L3.38 8.75 L2.75 8.62 L2.00 7.88 L1.88 7.12 L1.75 7.00 L1.75 2.88 L1.88 2.75 L2.00 2.00 L2.62 1.38 L2.88 1.38Z" fill="#1c2a4c"/><path transform="translate(222,702.3) scale(1.2480,1.0909)" d="M47.38 12.00 L46.62 12.75 L46.62 12.88 L47.38 13.62 L47.50 13.62 L48.25 12.88 L48.25 12.75 L47.50 12.00ZM26.75 10.50 L26.62 10.50 L25.88 11.25 L25.88 11.50 L26.62 12.25 L27.50 11.38 L27.50 11.25ZM24.38 10.50 L23.50 11.38 L24.38 12.25 L25.25 11.38 L25.25 11.25 L25.12 11.25ZM20.62 10.50 L19.88 11.25 L19.88 11.38 L20.75 12.25 L21.62 11.38 L21.62 11.25ZM48.62 10.25 L47.88 11.00 L47.75 11.00 L47.75 11.12 L48.50 11.88 L48.62 11.88 L49.38 11.12 L49.38 11.00ZM46.25 10.25 L45.38 11.12 L46.12 11.88 L46.38 11.88 L47.00 11.25 L47.00 11.00ZM0.50 7.62 L0.25 7.75 L0.00 8.12 L0.00 8.75 L0.62 9.25 L1.12 9.25 L1.38 9.12 L1.62 8.75 L1.62 8.00 L1.25 7.62ZM14.88 4.50 L14.50 4.50 L14.38 4.62 L13.75 4.75 L13.75 5.00 L13.88 5.12 L13.88 5.75 L14.00 5.88 L14.00 7.12 L13.75 7.75 L13.25 8.12 L8.12 8.12 L8.12 8.50 L8.50 9.25 L10.00 9.25 L10.12 9.38 L10.38 9.38 L10.75 9.75 L10.75 10.38 L10.25 10.88 L9.38 11.38 L8.62 11.50 L8.50 11.62 L6.50 11.62 L5.62 11.25 L4.88 10.50 L4.75 9.88 L4.62 9.75 L4.62 9.25 L4.50 9.12 L4.62 7.50 L4.88 6.88 L3.88 6.50 L3.62 7.12 L3.62 7.75 L3.50 7.88 L3.50 9.62 L3.62 9.75 L3.75 10.62 L4.12 11.38 L5.12 12.25 L5.62 12.50 L6.50 12.62 L6.62 12.75 L8.38 12.75 L8.50 12.62 L9.50 12.50 L10.62 12.00 L11.38 11.25 L11.75 10.62 L11.75 9.50 L11.62 9.38 L11.75 9.25 L13.38 9.25 L14.00 9.00 L14.50 8.62 L15.00 7.50 L15.00 5.12 L14.88 5.00ZM0.50 3.62 L0.25 3.75 L0.00 4.12 L0.00 4.75 L0.62 5.25 L1.12 5.25 L1.38 5.12 L1.62 4.75 L1.62 4.00 L1.25 3.62ZM41.75 2.12 L40.88 2.88 L40.88 3.00 L41.62 3.75 L41.75 3.75 L42.50 3.00 L42.50 2.88ZM39.38 2.12 L38.50 3.00 L39.25 3.75 L39.50 3.75 L40.12 3.12 L40.12 2.88ZM32.25 2.00 L31.38 2.88 L32.25 3.75 L33.12 2.88ZM30.00 2.00 L29.12 2.88 L30.00 3.75 L30.88 2.88ZM13.62 1.38 L12.75 2.25 L13.62 3.12 L14.50 2.25ZM40.50 0.38 L39.75 1.12 L39.75 1.38 L40.38 2.00 L40.62 2.00 L41.38 1.25ZM16.88 0.00 L16.88 6.62 L17.00 6.75 L17.00 7.62 L17.25 8.00 L17.25 8.25 L18.00 9.00 L18.62 9.12 L18.75 9.25 L20.62 9.25 L20.75 9.12 L21.12 9.12 L21.88 8.75 L22.38 8.25 L22.88 8.88 L23.75 9.25 L25.75 9.25 L25.88 9.12 L26.25 9.12 L27.00 8.75 L27.38 8.25 L27.50 8.25 L28.12 9.00 L28.75 9.12 L28.88 9.25 L30.75 9.25 L30.88 9.12 L31.25 9.12 L32.00 8.75 L32.38 8.25 L32.50 8.25 L33.12 9.00 L33.75 9.12 L33.88 9.25 L35.50 9.25 L35.62 9.12 L36.12 9.12 L36.88 8.62 L37.12 8.25 L37.88 9.00 L38.50 9.12 L38.62 9.25 L39.50 9.25 L39.62 9.12 L39.88 9.12 L40.38 8.88 L40.88 8.25 L41.62 9.00 L42.12 9.25 L43.12 9.25 L43.62 9.00 L44.38 8.25 L45.00 9.00 L45.62 9.25 L48.12 9.25 L49.00 8.88 L49.38 8.50 L49.88 7.12 L49.88 5.62 L49.75 5.50 L49.75 4.88 L49.62 4.75 L49.62 4.50 L49.38 4.50 L49.25 4.62 L48.62 4.75 L48.75 6.50 L48.88 6.62 L48.75 6.75 L48.75 7.38 L48.12 8.12 L45.75 8.12 L45.62 8.00 L45.38 8.00 L45.00 7.62 L44.75 7.00 L44.75 5.62 L44.62 5.50 L44.62 5.25 L44.38 5.38 L43.62 5.38 L43.62 5.88 L43.75 6.00 L43.75 7.00 L43.50 7.62 L43.00 8.12 L42.25 8.12 L41.75 7.75 L41.50 7.25 L41.50 6.75 L41.38 6.62 L41.38 5.38 L40.38 5.50 L40.38 7.12 L40.12 7.75 L39.50 8.12 L38.75 8.12 L38.00 7.62 L37.75 7.00 L37.62 5.38 L37.38 5.38 L37.25 5.50 L36.62 5.50 L36.62 6.38 L36.75 6.50 L36.62 6.62 L36.62 7.25 L36.00 8.00 L35.75 8.00 L35.62 8.12 L34.00 8.12 L33.50 7.88 L33.00 7.25 L32.88 5.25 L32.12 5.25 L31.88 5.38 L31.88 7.12 L31.38 7.88 L30.75 8.12 L29.00 8.12 L28.50 7.88 L28.00 7.25 L27.88 5.25 L27.12 5.25 L26.88 5.38 L26.88 7.12 L26.38 7.88 L25.75 8.12 L23.88 8.12 L23.38 7.88 L22.88 7.12 L22.75 5.25 L22.00 5.25 L21.75 5.38 L21.75 7.12 L21.25 7.88 L20.75 8.12 L18.88 8.12 L18.62 8.00 L18.00 7.25 L18.00 0.00Z" fill="#1c2a4c"/><circle cx="45.4" cy="687.5" r="37.3" fill="#2170a0"/><g stroke="#ffffff" stroke-width="4.7" fill="none"><path d="M25.3 686.3 L25.3 672.7 A5.2 5.2 0 0 1 35.75 672.7 L35.75 686.3 M35.75 672.7 A5.2 5.2 0 0 1 46.2 672.7 L46.2 686.3"/><path d="M52.8 665.2 L52.8 677.6 A6.4 6.4 0 0 0 65.6 677.6 L65.6 665.2"/><path d="M25.3 709.7 L25.3 696.3 A5.2 5.2 0 0 1 35.75 696.3 L35.75 709.7 M35.75 696.3 A5.2 5.2 0 0 1 46.2 696.3 L46.2 709.7"/><path d="M52.8 709.7 L52.8 696.5 A6.4 6.4 0 0 1 65.6 696.5 L65.6 709.7"/></g><circle cx="59.2" cy="700.6" r="2.3" fill="#ffffff"/><path transform="translate(1283.7,733.6) scale(1.1302,1.1294)" d="M16.75 9.12 L16.12 9.75 L16.12 9.88 L16.75 10.50 L17.00 10.50 L17.62 9.88 L17.62 9.75 L17.00 9.12ZM9.25 6.75 L9.12 7.00 L9.12 7.50 L9.25 7.75 L9.62 8.00 L10.12 8.00 L10.50 7.50 L10.50 7.00 L10.38 6.75 L10.12 6.62 L9.50 6.62ZM21.25 4.38 L21.12 4.25 L21.12 3.88 L21.00 4.00 L20.25 4.12 L20.25 4.62 L20.38 4.75 L20.38 6.25 L19.75 6.88 L19.50 6.88 L19.38 7.00 L14.88 7.00 L14.75 6.88 L13.88 6.75 L13.00 5.75 L13.00 4.88 L13.25 4.25 L12.62 4.00 L12.38 4.00 L12.25 4.25 L12.25 4.62 L12.12 4.75 L12.12 6.00 L12.50 6.88 L13.25 7.50 L13.50 7.50 L14.38 7.88 L15.12 7.88 L15.25 8.00 L18.88 8.00 L19.00 7.88 L19.75 7.88 L20.38 7.62 L21.12 6.88 L21.12 6.62 L21.25 6.50 L21.25 5.75 L21.38 5.62 L21.25 5.38ZM5.25 0.50 L4.50 1.25 L4.50 1.38 L5.25 2.12 L6.00 1.38 L6.00 1.25ZM1.75 0.00 L1.75 6.38 L1.12 7.12 L0.00 7.12 L0.00 8.00 L4.50 8.00 L4.62 7.88 L5.25 7.88 L5.38 7.75 L6.38 7.50 L7.25 6.75 L7.50 6.25 L7.50 4.88 L7.25 4.38 L6.38 3.62 L6.12 3.62 L6.00 3.50 L4.62 3.50 L4.00 3.75 L2.75 4.88 L2.62 4.75 L2.62 0.00ZM6.62 5.25 L6.62 6.00 L6.25 6.50 L5.75 6.75 L5.00 6.88 L4.88 7.00 L3.38 7.00 L3.25 7.12 L2.50 7.12 L2.38 7.00 L2.38 6.75 L3.12 5.75 L4.00 4.88 L4.62 4.50 L4.88 4.50 L5.00 4.38 L5.62 4.38 L5.75 4.50 L6.00 4.50Z" fill="#f0f0f0"/><path transform="translate(1255.8,752) scale(0.9620,1.0811)" d="M40.38 3.88 L40.25 4.00 L40.00 4.00 L39.38 4.50 L39.12 5.00 L39.00 5.62 L39.38 6.62 L39.75 7.00 L40.25 7.25 L41.12 7.25 L41.25 7.12 L41.50 7.12 L42.12 6.50 L42.38 6.00 L42.38 5.12 L42.12 4.62 L41.62 4.12 L41.12 3.88ZM40.62 4.62 L41.12 4.75 L41.62 5.38 L41.50 6.00 L40.88 6.50 L40.62 6.50 L40.12 6.25 L39.88 5.88 L39.88 5.25 L40.00 5.00ZM26.88 3.88 L26.75 4.00 L26.50 4.00 L25.88 4.50 L25.62 5.00 L25.50 5.62 L25.88 6.62 L26.25 7.00 L26.75 7.25 L27.62 7.25 L27.75 7.12 L28.00 7.12 L28.62 6.50 L28.88 6.00 L28.88 5.12 L28.62 4.62 L28.12 4.12 L27.62 3.88ZM27.12 4.62 L27.62 4.75 L28.12 5.38 L28.00 6.00 L27.38 6.50 L27.12 6.50 L26.62 6.25 L26.38 5.88 L26.38 5.25 L26.50 5.00ZM16.88 3.88 L16.75 4.00 L16.50 4.00 L15.88 4.50 L15.62 5.00 L15.50 5.62 L15.88 6.62 L16.25 7.00 L16.75 7.25 L17.62 7.25 L17.75 7.12 L18.00 7.12 L18.62 6.50 L18.88 6.00 L18.88 5.12 L18.62 4.62 L18.12 4.12 L17.62 3.88ZM17.12 4.62 L17.62 4.75 L18.12 5.38 L18.00 6.00 L17.38 6.50 L17.12 6.50 L16.62 6.25 L16.38 5.88 L16.38 5.25 L16.50 5.00ZM11.75 3.88 L11.25 4.12 L10.75 4.62 L10.50 5.12 L10.50 6.00 L10.75 6.50 L11.38 7.12 L11.62 7.12 L11.75 7.25 L12.62 7.25 L13.12 7.00 L13.50 6.62 L13.88 5.62 L13.75 5.50 L13.75 5.00 L13.38 4.38 L12.88 4.00 L12.62 4.00 L12.50 3.88ZM12.00 4.62 L12.25 4.62 L12.75 4.88 L13.00 5.25 L13.00 5.88 L12.88 6.12 L12.25 6.50 L11.75 6.38 L11.25 5.75 L11.38 5.12ZM50.50 0.75 L49.62 0.88 L49.62 2.50 L49.12 3.12 L48.62 3.12 L48.12 2.62 L48.00 1.12 L47.25 1.12 L47.25 2.00 L47.12 2.12 L47.12 2.62 L47.00 2.88 L46.62 3.12 L46.00 3.12 L45.50 2.62 L44.75 0.75 L44.38 0.75 L43.88 1.00 L44.12 1.38 L44.12 1.62 L44.50 2.50 L44.62 3.75 L44.75 3.88 L44.75 5.25 L44.88 5.38 L44.88 8.38 L45.75 8.38 L45.75 5.25 L45.62 5.12 L45.62 4.00 L45.75 3.88 L45.88 4.00 L46.75 4.00 L47.25 3.75 L47.62 3.38 L48.38 4.00 L49.38 4.00 L49.62 3.88 L50.12 3.38 L50.38 2.88 L50.38 2.38 L50.50 2.25ZM30.88 0.75 L30.38 1.00 L30.62 1.38 L30.62 1.62 L31.00 2.50 L31.12 3.75 L31.25 3.88 L31.25 5.25 L31.38 5.38 L31.38 8.38 L32.25 8.38 L32.25 5.38 L32.12 5.25 L32.00 3.12 L31.88 3.00 L31.88 2.50 L31.75 2.38 L31.75 2.00 L31.62 1.88 L31.50 1.25 L31.25 0.75ZM8.50 0.88 L8.25 0.88 L8.12 0.75 L7.00 0.75 L6.62 1.00 L6.38 1.00 L5.62 1.88 L5.50 2.75 L5.25 3.00 L4.75 2.12 L4.38 0.88 L4.25 0.75 L4.00 0.75 L3.50 1.00 L3.50 1.25 L3.75 1.62 L3.75 1.88 L4.00 2.38 L4.12 3.50 L4.25 3.62 L4.25 4.75 L4.38 4.88 L4.38 8.38 L5.25 8.38 L5.25 4.75 L5.12 4.62 L5.12 4.00 L5.25 3.88 L5.62 4.25 L7.00 4.75 L8.38 4.75 L8.50 4.62 L9.12 4.50 L9.12 3.75 L9.00 3.62 L8.88 3.75 L8.38 3.75 L8.25 3.88 L7.00 3.88 L6.88 3.75 L6.62 3.75 L6.12 3.25 L6.12 3.00 L6.50 2.12 L7.25 1.62 L8.00 1.62 L8.62 2.00 L8.88 1.12ZM0.75 0.62 L0.38 0.88 L0.12 0.88 L0.00 1.12 L0.38 1.88 L0.38 2.25 L0.62 2.75 L0.75 4.38 L0.88 4.50 L0.88 8.38 L1.75 8.38 L1.75 4.62 L1.62 4.50 L1.62 3.50 L1.50 3.38 L1.38 2.25ZM37.75 0.00 L36.88 0.00 L36.25 1.88 L35.75 2.88 L35.62 3.50 L35.38 3.88 L35.00 5.12 L34.75 5.50 L34.75 5.75 L34.50 6.12 L34.00 7.75 L33.38 9.12 L34.25 9.12 L34.25 8.88 L34.75 7.88 L34.88 7.25 L35.12 6.88 L35.25 6.25 L35.50 5.88 L35.88 4.62 L36.12 4.25 L36.50 3.00 L36.75 2.62 L36.88 2.00 L37.12 1.62 L37.50 0.38ZM24.25 0.00 L23.38 0.00 L23.25 0.62 L23.00 1.00 L22.88 1.62 L22.62 2.00 L22.25 3.25 L21.75 4.25 L21.62 4.88 L21.38 5.25 L21.25 5.88 L21.00 6.25 L20.62 7.50 L20.12 8.50 L20.00 9.12 L20.75 9.12 L20.88 8.88 L20.88 8.62 L21.38 7.62 L21.50 7.00 L22.00 6.00 L22.12 5.38 L22.38 5.00 L22.50 4.38 L22.75 4.00 L22.75 3.75 L23.00 3.38 L23.12 2.75 L23.38 2.38 L23.50 1.75 L23.75 1.38 L23.75 1.12 L24.00 0.75 L24.00 0.50Z" fill="#f0f0f0"/></svg>

</body></html>
